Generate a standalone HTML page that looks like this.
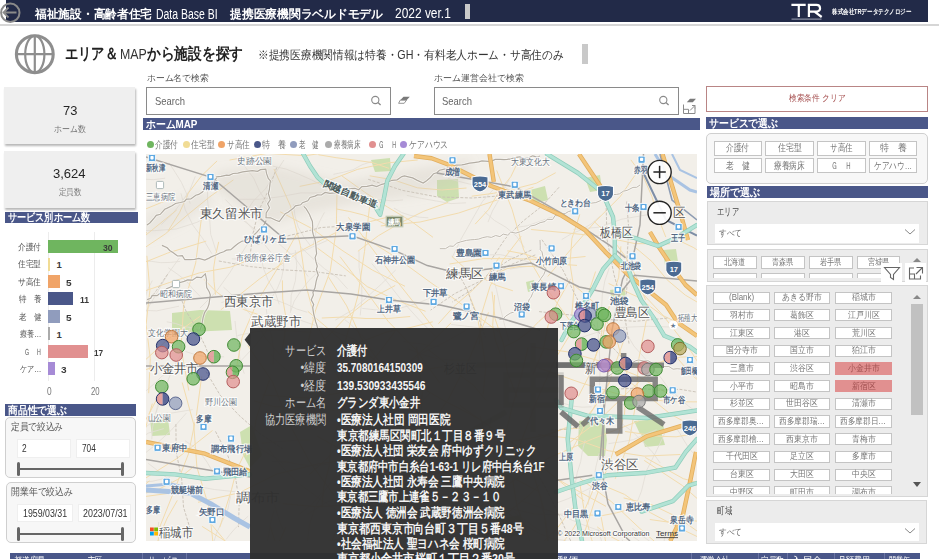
<!DOCTYPE html>
<html><head><meta charset="utf-8">
<style>
*{margin:0;padding:0;box-sizing:border-box}
html,body{width:940px;height:559px;overflow:hidden;background:#fff;font-family:"Liberation Sans",sans-serif;position:relative}
.a{position:absolute}
.f{position:absolute;white-space:nowrap;line-height:1}
.f>.s{display:inline-block;white-space:nowrap;transform-origin:0 0}
.c{text-align:center}
.c>.s{transform-origin:50% 0}
.r{text-align:right}
.r>.s{transform-origin:100% 0}
.bar{position:absolute;background:#4a5789}
.card{position:absolute;background:#efefef;box-shadow:1px 2px 2px #b8b8b8}
.sbox{position:absolute;border:1px solid #8a8a8a;background:#fff}
.rc{position:absolute;border:1px solid #cfcfcf;border-radius:5px;background:#f7f7f7}
.gc{position:absolute;background:#ececec;border:1px solid #d6d6d6}
.btn{position:absolute;border:1px solid #c4c4c4;background:#fff}
.bt{position:absolute;color:#777;font-size:9px;line-height:1;white-space:nowrap;text-align:center}
.w{color:#fff}
</style></head><body>
<!-- HEADER -->
<div class="a" style="left:6px;top:0;width:921.5px;height:22px;background:#222a48"></div>
<div class="a" style="left:0;top:24px;width:939px;height:2px;background:#d6d6d6"></div>
<svg class="a" style="left:0;top:0" width="24" height="26"><circle cx="10.3" cy="12.8" r="9.2" fill="none" stroke="#8a8a8a" stroke-width="2"/><path d="M3.5 12.5H16.5M8.5 7.5L3.5 12.5L8.5 17.5" fill="none" stroke="#8a8a8a" stroke-width="1.8"/></svg>
<div class="f w" style="left:35px;top:8.3px;width:117px;font-size:12px;font-weight:bold"><span class="s" style="transform:scaleX(0.975)">福祉施設・高齢者住宅</span></div>
<div class="f w" style="left:155.5px;top:6.6px;width:62px;font-size:14px"><span class="s" style="transform:scaleX(0.747)">Data Base BI</span></div>
<div class="f w" style="left:229.5px;top:8.3px;width:153px;font-size:12px;font-weight:bold"><span class="s" style="transform:scaleX(0.9808)">提携医療機関ラベルドモデル</span></div>
<div class="f w" style="left:395px;top:6.4px;width:56px;font-size:14.5px"><span class="s" style="transform:scaleX(0.8235)">2022 ver.1</span></div>
<div class="a" style="left:464.5px;top:4px;width:5.5px;height:15px;background:#c9c9c9"></div>
<svg class="a" style="left:785px;top:0" width="45" height="22"><path d="M6.4 4.8H20.7M13.8 4.8V17M23.9 17V4.8H31.5C36 4.8 36.5 11.6 31.5 11.6H24.2M29.5 11.6L36.7 17" fill="none" stroke="#fff" stroke-width="2.2"/><rect x="6.5" y="18.6" width="30" height="1" fill="#c0c4d4" fill-opacity="0.8"/></svg>
<div class="f w" style="left:832px;top:8px;width:79px;font-size:7px;font-weight:bold"><span class="s" style="transform:scaleX(0.79)">株式会社TRデータテクノロジー</span></div>

<!-- TITLE -->
<svg class="a" style="left:10px;top:30px" width="50" height="50"><circle cx="24.8" cy="24.2" r="18.4" fill="none" stroke="#8e8e8e" stroke-width="3.1"/><ellipse cx="24.8" cy="24.2" rx="9.6" ry="18.4" fill="none" stroke="#8e8e8e" stroke-width="2.2"/><path d="M6.5 24.2H43M24.8 6V42.5" stroke="#8e8e8e" stroke-width="2.2"/></svg>
<div class="f" style="left:64.5px;top:46px;width:53px;font-size:16px;font-weight:bold;color:#222"><span class="s" style="transform:scaleX(0.8281)">エリア＆</span></div>
<div class="f" style="left:119.5px;top:47.4px;width:26.5px;font-size:14px;color:#333"><span class="s" style="transform:scaleX(0.8833)">MAP</span></div>
<div class="f" style="left:147px;top:46px;width:96px;font-size:16px;font-weight:bold;color:#222"><span class="s" style="transform:scaleX(0.8571)">から施設を探す</span></div>
<div class="f" style="left:258px;top:49px;width:305.5px;font-size:12px;color:#333"><span class="s" style="transform:scaleX(0.8933)">※提携医療機関情報は特養・GH・有料老人ホーム・サ高住のみ</span></div>
<div class="a" style="left:581.5px;top:43.5px;width:6.5px;height:20px;background:#c9c9c9"></div>

<!-- SEARCH -->
<div class="f" style="left:146.5px;top:73.5px;width:61.5px;font-size:9px;color:#555"><span class="s" style="transform:scaleX(0.9762)">ホーム名で検索</span></div>
<div class="sbox" style="left:146px;top:87px;width:245px;height:28px"></div>
<div class="f" style="left:154.5px;top:96px;width:30px;font-size:11px;color:#666"><span class="s" style="transform:scaleX(0.8571)">Search</span></div>
<svg class="a" style="left:368px;top:93px" width="16" height="16"><circle cx="7.3" cy="7" r="3.6" fill="none" stroke="#8a8a8a" stroke-width="1.1"/><path d="M9.9 9.6L12.6 12" stroke="#8a8a8a" stroke-width="1.3"/></svg>
<svg class="a" style="left:398px;top:94px" width="14" height="12"><path d="M5.5 2.8H11.8L8.5 6.2H2.2Z" fill="#7a7a7a"/><path d="M2.2 6.2H8.5L6.2 9.3H0.6Z" fill="#fff" stroke="#8a8a8a" stroke-width="0.9"/></svg>
<div class="f" style="left:433.5px;top:73.5px;width:89.5px;font-size:9px;color:#555"><span class="s" style="transform:scaleX(0.9944)">ホーム運営会社で検索</span></div>
<div class="sbox" style="left:433.5px;top:87px;width:245.5px;height:28px"></div>
<div class="f" style="left:441.5px;top:96px;width:30px;font-size:11px;color:#666"><span class="s" style="transform:scaleX(0.8571)">Search</span></div>
<svg class="a" style="left:656px;top:93px" width="16" height="16"><circle cx="7.3" cy="7" r="3.6" fill="none" stroke="#8a8a8a" stroke-width="1.1"/><path d="M9.9 9.6L12.6 12" stroke="#8a8a8a" stroke-width="1.3"/></svg>
<svg class="a" style="left:682px;top:94px" width="16" height="22"><path d="M8 4.8H14L10.8 8.2H4.8Z" fill="#7a7a7a"/><path d="M1.5 10.5V19.5H13V13.5M1.5 15.3H6.5V19.5M8 16.5L13 11.5M10 11.5H13V14.5" fill="none" stroke="#8a8a8a" stroke-width="1"/></svg>
<!-- KPI -->
<div class="card" style="left:4px;top:87px;width:131px;height:57px"></div>
<div class="f" style="left:63px;top:104px;width:14.3px;font-size:13.5px;color:#252525"><span class="s" style="transform:scaleX(0.9533)">73</span></div>
<div class="f" style="left:53.7px;top:124.5px;width:31.6px;font-size:9px;color:#777"><span class="s" style="transform:scaleX(0.8778)">ホーム数</span></div>
<div class="card" style="left:4px;top:150.5px;width:131px;height:57px"></div>
<div class="f" style="left:53.1px;top:167px;width:32.8px;font-size:13.5px;color:#252525"><span class="s" style="transform:scaleX(0.9647)">3,624</span></div>
<div class="f" style="left:58.5px;top:188px;width:22.5px;font-size:9px;color:#777"><span class="s" style="transform:scaleX(0.8333)">定員数</span></div>
<div class="bar" style="left:5px;top:211.5px;width:133px;height:11.5px"></div>
<div class="f w" style="left:8px;top:212px;width:82px;font-size:11px;font-weight:bold"><span class="s" style="transform:scaleX(0.8283)">サービス別ホーム数</span></div>

<!-- BAR CHART -->
<div class="a" style="left:48px;top:232px;width:1px;height:149px;background:#ececec"></div>
<div class="a" style="left:94px;top:232px;width:1px;height:149px;background:#ececec"></div>
<div class="a" style="left:48px;top:240px;width:69.5px;height:13px;background:#6fb55f"></div>
<div class="a" style="left:48px;top:257.5px;width:2.4px;height:13px;background:#f1dc95"></div>
<div class="a" style="left:48px;top:275px;width:11.8px;height:13px;background:#f0a468"></div>
<div class="a" style="left:48px;top:292.4px;width:25.3px;height:13px;background:#4a5789"></div>
<div class="a" style="left:48px;top:309.9px;width:11.8px;height:13px;background:#909cbd"></div>
<div class="a" style="left:48px;top:327.3px;width:2.4px;height:13px;background:#ababab"></div>
<div class="a" style="left:48px;top:344.8px;width:39.6px;height:13px;background:#e19090"></div>
<div class="a" style="left:48px;top:362.2px;width:7.2px;height:13px;background:#a68bd6"></div>
<div class="f" style="left:18.4px;top:242.5px;width:22.9px;font-size:9px;color:#555"><span class="s" style="transform:scaleX(0.8481)">介護付</span></div>
<div class="f" style="left:18.4px;top:260px;width:22.9px;font-size:9px;color:#555"><span class="s" style="transform:scaleX(0.8481)">住宅型</span></div>
<div class="f" style="left:18.4px;top:277.5px;width:22.9px;font-size:9px;color:#555"><span class="s" style="transform:scaleX(0.8481)">サ高住</span></div>
<div class="f" style="left:18.8px;top:295px;width:22.5px;font-size:9px;color:#555"><span class="s" style="transform:scaleX(0.8333)">特　養</span></div>
<div class="f" style="left:18.8px;top:312.5px;width:22.5px;font-size:9px;color:#555"><span class="s" style="transform:scaleX(0.8333)">老　健</span></div>
<div class="f" style="left:20.0px;top:330px;width:21.3px;font-size:9px;color:#555"><span class="s" style="transform:scaleX(0.7889)">療養…</span></div>
<div class="f" style="left:23.8px;top:347.5px;width:17.5px;font-size:9px;color:#555"><span class="s" style="transform:scaleX(0.6481)">Ｇ　Ｈ</span></div>
<div class="f" style="left:20.0px;top:365px;width:21.3px;font-size:9px;color:#555"><span class="s" style="transform:scaleX(0.7889)">ケア…</span></div>
<div class="f" style="left:102.5px;top:242.5px;width:10px;font-size:9.5px;font-weight:bold;color:#3a3a3a"><span class="s" style="transform:scaleX(0.9091)">30</span></div>
<div class="f" style="left:56.5px;top:260px;width:5px;font-size:9.5px;font-weight:bold;color:#3a3a3a"><span class="s" style="transform:scaleX(1)">1</span></div>
<div class="f" style="left:66px;top:277.5px;width:5.3px;font-size:9.5px;font-weight:bold;color:#3a3a3a"><span class="s" style="transform:scaleX(1.06)">5</span></div>
<div class="f" style="left:79.5px;top:295px;width:9px;font-size:9.5px;font-weight:bold;color:#3a3a3a"><span class="s" style="transform:scaleX(0.9)">11</span></div>
<div class="f" style="left:66px;top:312.5px;width:5.3px;font-size:9.5px;font-weight:bold;color:#3a3a3a"><span class="s" style="transform:scaleX(1.06)">5</span></div>
<div class="f" style="left:56.5px;top:330px;width:5px;font-size:9.5px;font-weight:bold;color:#3a3a3a"><span class="s" style="transform:scaleX(1)">1</span></div>
<div class="f" style="left:93.5px;top:347.5px;width:9.5px;font-size:9.5px;font-weight:bold;color:#3a3a3a"><span class="s" style="transform:scaleX(0.8636)">17</span></div>
<div class="f" style="left:60.5px;top:365px;width:5.3px;font-size:9.5px;font-weight:bold;color:#3a3a3a"><span class="s" style="transform:scaleX(1.06)">3</span></div>
<div class="f" style="left:46.5px;top:387px;width:5px;font-size:10px;color:#777"><span class="s" style="transform:scaleX(0.8333)">0</span></div>
<div class="f" style="left:90.5px;top:387px;width:8.5px;font-size:10px;color:#777"><span class="s" style="transform:scaleX(0.7727)">20</span></div>

<!-- 商品性 -->
<div class="bar" style="left:5px;top:404px;width:131px;height:12px"></div>
<div class="f w" style="left:8px;top:404.5px;width:59px;font-size:11px;font-weight:bold"><span class="s" style="transform:scaleX(0.8939)">商品性で選ぶ</span></div>
<div class="rc" style="left:5px;top:417px;width:131px;height:61px"></div>
<div class="f" style="left:11px;top:422px;width:52px;font-size:9.5px;color:#555"><span class="s" style="transform:scaleX(0.8667)">定員で絞込み</span></div>
<div class="a" style="left:17px;top:439px;width:54px;height:18.5px;background:#fff;border:1px solid #efefef"></div>
<div class="a" style="left:76px;top:439px;width:54px;height:18.5px;background:#fff;border:1px solid #efefef"></div>
<div class="f" style="left:22px;top:444px;width:5px;font-size:10px;color:#333"><span class="s" style="transform:scaleX(0.8333)">2</span></div>
<div class="f" style="left:81.5px;top:444px;width:14px;font-size:10px;color:#333"><span class="s" style="transform:scaleX(0.8235)">704</span></div>
<div class="a" style="left:17px;top:467.5px;width:106px;height:2.4px;background:#666"></div>
<div class="a" style="left:16.5px;top:462px;width:3px;height:14px;border-radius:1.5px;background:#666"></div>
<div class="a" style="left:120.5px;top:462px;width:3px;height:14px;border-radius:1.5px;background:#666"></div>
<div class="rc" style="left:5.5px;top:482px;width:130px;height:61px"></div>
<div class="f" style="left:11px;top:486.5px;width:62px;font-size:9.5px;color:#555"><span class="s" style="transform:scaleX(0.8857)">開業年で絞込み</span></div>
<div class="a" style="left:17px;top:503.5px;width:56px;height:18.5px;background:#fff;border:1px solid #efefef"></div>
<div class="a" style="left:77.5px;top:503.5px;width:53px;height:18.5px;background:#fff;border:1px solid #efefef"></div>
<div class="f" style="left:22.5px;top:508.5px;width:44px;font-size:10px;color:#333"><span class="s" style="transform:scaleX(0.88)">1959/03/31</span></div>
<div class="f" style="left:82.5px;top:508.5px;width:44.5px;font-size:10px;color:#333"><span class="s" style="transform:scaleX(0.89)">2023/07/31</span></div>
<div class="a" style="left:17px;top:532.5px;width:106px;height:2.4px;background:#666"></div>
<div class="a" style="left:16.5px;top:527px;width:3px;height:14px;border-radius:1.5px;background:#666"></div>
<div class="a" style="left:120.5px;top:527px;width:3px;height:14px;border-radius:1.5px;background:#666"></div>

<!-- BOTTOM TABLE HEADER -->
<div class="a" style="left:10px;top:553px;width:910px;height:6px;background:#4a5789"></div>
<div class="a" style="left:142px;top:553px;width:1px;height:6px;background:#6a74a4"></div>
<div class="a" style="left:186px;top:553px;width:1px;height:6px;background:#6a74a4"></div>
<div class="a" style="left:691px;top:553px;width:1px;height:6px;background:#6a74a4"></div>
<div class="a" style="left:758px;top:553px;width:1px;height:6px;background:#6a74a4"></div>
<div class="a" style="left:787px;top:553px;width:1px;height:6px;background:#6a74a4"></div>
<div class="a" style="left:833.5px;top:553px;width:1px;height:6px;background:#6a74a4"></div>
<div class="a" style="left:884px;top:553px;width:1px;height:6px;background:#6a74a4"></div>
<div class="f w" style="left:14px;top:556px;width:31px;font-size:10px"><span class="s" style="transform:scaleX(0.775)">都道府県</span></div>
<div class="f w" style="left:88px;top:556px;width:14px;font-size:10px"><span class="s" style="transform:scaleX(0.7)">市区</span></div>
<div class="f w" style="left:148px;top:556px;width:30px;font-size:10px"><span class="s" style="transform:scaleX(0.75)">サービス</span></div>
<div class="f w" style="left:557px;top:556px;width:21px;font-size:10px"><span class="s" style="transform:scaleX(1.05)">郵便</span></div>
<div class="f w" style="left:700px;top:556px;width:29px;font-size:10px"><span class="s" style="transform:scaleX(0.725)">運営会社</span></div>
<div class="f w" style="left:761px;top:556px;width:23px;font-size:10px"><span class="s" style="transform:scaleX(0.7667)">定員数</span></div>
<div class="f w" style="left:791px;top:556px;width:32px;font-size:10px"><span class="s" style="transform:scaleX(1.0667)">入居金</span></div>
<div class="f w" style="left:838px;top:556px;width:32px;font-size:10px"><span class="s" style="transform:scaleX(0.8)">月額費用</span></div>
<div class="f w" style="left:889px;top:556px;width:21px;font-size:10px"><span class="s" style="transform:scaleX(0.7)">開業年</span></div>

<!-- RIGHT -->
<div class="a" style="left:706px;top:86px;width:222px;height:26px;border:1px solid #b98585;background:#fff"></div>
<div class="f" style="left:788.9px;top:93.9px;width:56.7px;font-size:9px;color:#a65050"><span class="s" style="transform:scaleX(0.8591)">検索条件 クリア</span></div>
<div class="bar" style="left:706px;top:117px;width:222px;height:12px"></div>
<div class="f w" style="left:709px;top:117.5px;width:69px;font-size:11px;font-weight:bold"><span class="s" style="transform:scaleX(0.8961)">サービスで選ぶ</span></div>
<div class="rc" style="left:706px;top:133px;width:222px;height:51px"></div>
<div class="btn" style="left:713.5px;top:140.5px;width:48.5px;height:15px"></div>
<div class="f" style="left:726.2px;top:143.2px;width:23.0px;font-size:9.5px;color:#777"><span class="s" style="transform:scaleX(0.7667)">介護付</span></div>
<div class="btn" style="left:765.4px;top:140.5px;width:48.5px;height:15px"></div>
<div class="f" style="left:777.8px;top:143.2px;width:23.7px;font-size:9.5px;color:#777"><span class="s" style="transform:scaleX(0.79)">住宅型</span></div>
<div class="btn" style="left:817px;top:140.5px;width:48.5px;height:15px"></div>
<div class="f" style="left:830.0px;top:143.2px;width:22.5px;font-size:9.5px;color:#777"><span class="s" style="transform:scaleX(0.75)">サ高住</span></div>
<div class="btn" style="left:868.8px;top:140.5px;width:48.5px;height:15px"></div>
<div class="f" style="left:879.6px;top:143.2px;width:26.8px;font-size:9.5px;color:#777"><span class="s" style="transform:scaleX(0.8933)">特　養</span></div>
<div class="btn" style="left:713.5px;top:158.4px;width:48.5px;height:15px"></div>
<div class="f" style="left:726.0px;top:161.2px;width:23.5px;font-size:9.5px;color:#777"><span class="s" style="transform:scaleX(0.7833)">老　健</span></div>
<div class="btn" style="left:765.4px;top:158.4px;width:48.5px;height:15px"></div>
<div class="f" style="left:774.3px;top:161.2px;width:30.7px;font-size:9.5px;color:#777"><span class="s" style="transform:scaleX(0.7675)">療養病床</span></div>
<div class="btn" style="left:817px;top:158.4px;width:48.5px;height:15px"></div>
<div class="f" style="left:831.0px;top:161.2px;width:20.4px;font-size:9.5px;color:#777"><span class="s" style="transform:scaleX(0.68)">Ｇ　Ｈ</span></div>
<div class="btn" style="left:868.8px;top:158.4px;width:48.5px;height:15px"></div>
<div class="f" style="left:873.9px;top:161.2px;width:38.3px;font-size:9.5px;color:#777"><span class="s" style="transform:scaleX(0.766)">ケアハウ…</span></div>
<div class="bar" style="left:707px;top:186px;width:221px;height:12.3px"></div>
<div class="f w" style="left:710px;top:186.5px;width:50px;font-size:11px;font-weight:bold"><span class="s" style="transform:scaleX(0.9091)">場所で選ぶ</span></div>
<div class="gc" style="left:707px;top:201px;width:221px;height:43.5px"></div>
<div class="f" style="left:716.5px;top:206.5px;width:22px;font-size:9.5px;color:#444"><span class="s" style="transform:scaleX(0.7333)">エリア</span></div>
<div class="a" style="left:715px;top:224px;width:204px;height:18.5px;background:#fff"></div>
<div class="f" style="left:719px;top:229px;width:23px;font-size:9px;color:#666"><span class="s" style="transform:scaleX(0.8519)">すべて</span></div>
<svg class="a" style="left:904px;top:228px" width="12" height="8"><path d="M1 1.5L6 6L11 1.5" fill="none" stroke="#888" stroke-width="1"/></svg>
<div class="gc" style="left:707px;top:249px;width:221px;height:32.5px;overflow:hidden"></div>
<div class="btn" style="left:713.3px;top:255.7px;width:43.3px;height:13px"></div>
<div class="f" style="left:724.2px;top:257.7px;width:21.5px;font-size:9px;color:#777"><span class="s" style="transform:scaleX(0.7963)">北海道</span></div>
<div class="btn" style="left:713.3px;top:273px;width:43.3px;height:5px;border-bottom:none"></div>
<div class="btn" style="left:761.3px;top:255.7px;width:43.3px;height:13px"></div>
<div class="f" style="left:772.2px;top:257.7px;width:21.5px;font-size:9px;color:#777"><span class="s" style="transform:scaleX(0.7963)">青森県</span></div>
<div class="btn" style="left:761.3px;top:273px;width:43.3px;height:5px;border-bottom:none"></div>
<div class="btn" style="left:809.3px;top:255.7px;width:43.3px;height:13px"></div>
<div class="f" style="left:820.2px;top:257.7px;width:21.5px;font-size:9px;color:#777"><span class="s" style="transform:scaleX(0.7963)">岩手県</span></div>
<div class="btn" style="left:809.3px;top:273px;width:43.3px;height:5px;border-bottom:none"></div>
<div class="btn" style="left:856.8px;top:255.7px;width:43.3px;height:13px"></div>
<div class="f" style="left:867.7px;top:257.7px;width:21.5px;font-size:9px;color:#777"><span class="s" style="transform:scaleX(0.7963)">宮城県</span></div>
<div class="btn" style="left:856.8px;top:273px;width:43.3px;height:5px;border-bottom:none"></div>
<svg class="a" style="left:912px;top:257px" width="10" height="6"><path d="M1 5L5 1L9 5Z" fill="#888"/></svg>
<div class="a" style="left:881px;top:263px;width:21px;height:18.5px;background:#fff"></div>
<div class="a" style="left:905px;top:263px;width:21px;height:18.5px;background:#fff"></div>
<svg class="a" style="left:882px;top:265px" width="20" height="16"><path d="M2.5 2.5H17.5L11.5 9.5V14.5L8.5 12.5V9.5Z" fill="none" stroke="#666" stroke-width="1.1"/></svg>
<svg class="a" style="left:907px;top:265px" width="18" height="16"><path d="M9.5 2.5H15.5V8.5M15.5 2.5L9 9M7 3H2.5V14H13.5V10.5M2.5 9H7.5V14" fill="none" stroke="#666" stroke-width="1.1"/></svg>
<div class="gc" style="left:706px;top:284.6px;width:221.5px;height:212.7px"></div>
<div class="btn" style="left:713.3px;top:291.5px;width:56.3px;height:12.3px;background:#fff;border-color:#c4c4c4;"></div>
<div class="f" style="left:728.7px;top:293.1px;width:25.5px;font-size:9px;color:#777"><span class="s" style="transform:scaleX(0.8793)">(Blank)</span></div>
<div class="btn" style="left:774px;top:291.5px;width:56.3px;height:12.3px;background:#fff;border-color:#c4c4c4;"></div>
<div class="f" style="left:782.4px;top:293.1px;width:39.5px;font-size:9px;color:#777"><span class="s" style="transform:scaleX(0.8778)">あきる野市</span></div>
<div class="btn" style="left:835.3px;top:291.5px;width:56.3px;height:12.3px;background:#fff;border-color:#c4c4c4;"></div>
<div class="f" style="left:851.6px;top:293.1px;width:23.7px;font-size:9px;color:#777"><span class="s" style="transform:scaleX(0.8778)">稲城市</span></div>
<div class="btn" style="left:713.3px;top:309.2px;width:56.3px;height:12.3px;background:#fff;border-color:#c4c4c4;"></div>
<div class="f" style="left:729.6px;top:310.8px;width:23.7px;font-size:9px;color:#777"><span class="s" style="transform:scaleX(0.8778)">羽村市</span></div>
<div class="btn" style="left:774px;top:309.2px;width:56.3px;height:12.3px;background:#fff;border-color:#c4c4c4;"></div>
<div class="f" style="left:790.3px;top:310.8px;width:23.7px;font-size:9px;color:#777"><span class="s" style="transform:scaleX(0.8778)">葛飾区</span></div>
<div class="btn" style="left:835.3px;top:309.2px;width:56.3px;height:12.3px;background:#fff;border-color:#c4c4c4;"></div>
<div class="f" style="left:847.6px;top:310.8px;width:31.6px;font-size:9px;color:#777"><span class="s" style="transform:scaleX(0.8778)">江戸川区</span></div>
<div class="btn" style="left:713.3px;top:326.9px;width:56.3px;height:12.3px;background:#fff;border-color:#c4c4c4;"></div>
<div class="f" style="left:729.6px;top:328.5px;width:23.7px;font-size:9px;color:#777"><span class="s" style="transform:scaleX(0.8778)">江東区</span></div>
<div class="btn" style="left:774px;top:326.9px;width:56.3px;height:12.3px;background:#fff;border-color:#c4c4c4;"></div>
<div class="f" style="left:794.2px;top:328.5px;width:15.8px;font-size:9px;color:#777"><span class="s" style="transform:scaleX(0.8778)">港区</span></div>
<div class="btn" style="left:835.3px;top:326.9px;width:56.3px;height:12.3px;background:#fff;border-color:#c4c4c4;"></div>
<div class="f" style="left:851.6px;top:328.5px;width:23.7px;font-size:9px;color:#777"><span class="s" style="transform:scaleX(0.8778)">荒川区</span></div>
<div class="btn" style="left:713.3px;top:344.6px;width:56.3px;height:12.3px;background:#fff;border-color:#c4c4c4;"></div>
<div class="f" style="left:725.6px;top:346.2px;width:31.6px;font-size:9px;color:#777"><span class="s" style="transform:scaleX(0.8778)">国分寺市</span></div>
<div class="btn" style="left:774px;top:344.6px;width:56.3px;height:12.3px;background:#fff;border-color:#c4c4c4;"></div>
<div class="f" style="left:790.3px;top:346.2px;width:23.7px;font-size:9px;color:#777"><span class="s" style="transform:scaleX(0.8778)">国立市</span></div>
<div class="btn" style="left:835.3px;top:344.6px;width:56.3px;height:12.3px;background:#fff;border-color:#c4c4c4;"></div>
<div class="f" style="left:851.6px;top:346.2px;width:23.7px;font-size:9px;color:#777"><span class="s" style="transform:scaleX(0.8778)">狛江市</span></div>
<div class="btn" style="left:713.3px;top:362.3px;width:56.3px;height:12.3px;background:#fff;border-color:#c4c4c4;"></div>
<div class="f" style="left:729.6px;top:363.9px;width:23.7px;font-size:9px;color:#777"><span class="s" style="transform:scaleX(0.8778)">三鷹市</span></div>
<div class="btn" style="left:774px;top:362.3px;width:56.3px;height:12.3px;background:#fff;border-color:#c4c4c4;"></div>
<div class="f" style="left:790.3px;top:363.9px;width:23.7px;font-size:9px;color:#777"><span class="s" style="transform:scaleX(0.8778)">渋谷区</span></div>
<div class="btn" style="left:835.3px;top:362.3px;width:56.3px;height:12.3px;background:#e19090;border-color:#e19090;"></div>
<div class="f" style="left:847.6px;top:363.9px;width:31.6px;font-size:9px;color:#a05050"><span class="s" style="transform:scaleX(0.8778)">小金井市</span></div>
<div class="btn" style="left:713.3px;top:380.0px;width:56.3px;height:12.3px;background:#fff;border-color:#c4c4c4;"></div>
<div class="f" style="left:729.6px;top:381.6px;width:23.7px;font-size:9px;color:#777"><span class="s" style="transform:scaleX(0.8778)">小平市</span></div>
<div class="btn" style="left:774px;top:380.0px;width:56.3px;height:12.3px;background:#fff;border-color:#c4c4c4;"></div>
<div class="f" style="left:790.3px;top:381.6px;width:23.7px;font-size:9px;color:#777"><span class="s" style="transform:scaleX(0.8778)">昭島市</span></div>
<div class="btn" style="left:835.3px;top:380.0px;width:56.3px;height:12.3px;background:#e19090;border-color:#e19090;"></div>
<div class="f" style="left:851.6px;top:381.6px;width:23.7px;font-size:9px;color:#a05050"><span class="s" style="transform:scaleX(0.8778)">新宿区</span></div>
<div class="btn" style="left:713.3px;top:397.7px;width:56.3px;height:12.3px;background:#fff;border-color:#c4c4c4;"></div>
<div class="f" style="left:729.6px;top:399.3px;width:23.7px;font-size:9px;color:#777"><span class="s" style="transform:scaleX(0.8778)">杉並区</span></div>
<div class="btn" style="left:774px;top:397.7px;width:56.3px;height:12.3px;background:#fff;border-color:#c4c4c4;"></div>
<div class="f" style="left:786.4px;top:399.3px;width:31.6px;font-size:9px;color:#777"><span class="s" style="transform:scaleX(0.8778)">世田谷区</span></div>
<div class="btn" style="left:835.3px;top:397.7px;width:56.3px;height:12.3px;background:#fff;border-color:#c4c4c4;"></div>
<div class="f" style="left:851.6px;top:399.3px;width:23.7px;font-size:9px;color:#777"><span class="s" style="transform:scaleX(0.8778)">清瀬市</span></div>
<div class="btn" style="left:713.3px;top:415.4px;width:56.3px;height:12.3px;background:#fff;border-color:#c4c4c4;"></div>
<div class="f" style="left:718.4px;top:417.0px;width:46.0px;font-size:9px;color:#777"><span class="s" style="transform:scaleX(0.8519)">西多摩郡奥…</span></div>
<div class="btn" style="left:774px;top:415.4px;width:56.3px;height:12.3px;background:#fff;border-color:#c4c4c4;"></div>
<div class="f" style="left:779.1px;top:417.0px;width:46.0px;font-size:9px;color:#777"><span class="s" style="transform:scaleX(0.8519)">西多摩郡瑞…</span></div>
<div class="btn" style="left:835.3px;top:415.4px;width:56.3px;height:12.3px;background:#fff;border-color:#c4c4c4;"></div>
<div class="f" style="left:840.4px;top:417.0px;width:46.0px;font-size:9px;color:#777"><span class="s" style="transform:scaleX(0.8519)">西多摩郡日…</span></div>
<div class="btn" style="left:713.3px;top:433.1px;width:56.3px;height:12.3px;background:#fff;border-color:#c4c4c4;"></div>
<div class="f" style="left:718.4px;top:434.8px;width:46.0px;font-size:9px;color:#777"><span class="s" style="transform:scaleX(0.8519)">西多摩郡檜…</span></div>
<div class="btn" style="left:774px;top:433.1px;width:56.3px;height:12.3px;background:#fff;border-color:#c4c4c4;"></div>
<div class="f" style="left:786.4px;top:434.8px;width:31.6px;font-size:9px;color:#777"><span class="s" style="transform:scaleX(0.8778)">西東京市</span></div>
<div class="btn" style="left:835.3px;top:433.1px;width:56.3px;height:12.3px;background:#fff;border-color:#c4c4c4;"></div>
<div class="f" style="left:851.6px;top:434.8px;width:23.7px;font-size:9px;color:#777"><span class="s" style="transform:scaleX(0.8778)">青梅市</span></div>
<div class="btn" style="left:713.3px;top:450.8px;width:56.3px;height:12.3px;background:#fff;border-color:#c4c4c4;"></div>
<div class="f" style="left:725.6px;top:452.4px;width:31.6px;font-size:9px;color:#777"><span class="s" style="transform:scaleX(0.8778)">千代田区</span></div>
<div class="btn" style="left:774px;top:450.8px;width:56.3px;height:12.3px;background:#fff;border-color:#c4c4c4;"></div>
<div class="f" style="left:790.3px;top:452.4px;width:23.7px;font-size:9px;color:#777"><span class="s" style="transform:scaleX(0.8778)">足立区</span></div>
<div class="btn" style="left:835.3px;top:450.8px;width:56.3px;height:12.3px;background:#fff;border-color:#c4c4c4;"></div>
<div class="f" style="left:851.6px;top:452.4px;width:23.7px;font-size:9px;color:#777"><span class="s" style="transform:scaleX(0.8778)">多摩市</span></div>
<div class="btn" style="left:713.3px;top:468.5px;width:56.3px;height:12.3px;background:#fff;border-color:#c4c4c4;"></div>
<div class="f" style="left:729.6px;top:470.1px;width:23.7px;font-size:9px;color:#777"><span class="s" style="transform:scaleX(0.8778)">台東区</span></div>
<div class="btn" style="left:774px;top:468.5px;width:56.3px;height:12.3px;background:#fff;border-color:#c4c4c4;"></div>
<div class="f" style="left:790.3px;top:470.1px;width:23.7px;font-size:9px;color:#777"><span class="s" style="transform:scaleX(0.8778)">大田区</span></div>
<div class="btn" style="left:835.3px;top:468.5px;width:56.3px;height:12.3px;background:#fff;border-color:#c4c4c4;"></div>
<div class="f" style="left:851.6px;top:470.1px;width:23.7px;font-size:9px;color:#777"><span class="s" style="transform:scaleX(0.8778)">中央区</span></div>
<div class="btn" style="left:713.3px;top:486.2px;width:56.3px;height:8.1px;background:#fff;border-color:#c4c4c4;border-bottom:none;"></div>
<div class="a" style="left:713.3px;top:486.2px;width:56.3px;height:8.1px;overflow:hidden">
<div class="f" style="left:16.3px;top:1.7px;width:23.7px;font-size:9px;color:#777"><span class="s" style="transform:scaleX(0.8778)">中野区</span></div></div>
<div class="btn" style="left:774px;top:486.2px;width:56.3px;height:8.1px;background:#fff;border-color:#c4c4c4;border-bottom:none;"></div>
<div class="a" style="left:774px;top:486.2px;width:56.3px;height:8.1px;overflow:hidden">
<div class="f" style="left:16.3px;top:1.7px;width:23.7px;font-size:9px;color:#777"><span class="s" style="transform:scaleX(0.8778)">町田市</span></div></div>
<div class="btn" style="left:835.3px;top:486.2px;width:56.3px;height:8.1px;background:#fff;border-color:#c4c4c4;border-bottom:none;"></div>
<div class="a" style="left:835.3px;top:486.2px;width:56.3px;height:8.1px;overflow:hidden">
<div class="f" style="left:16.3px;top:1.7px;width:23.7px;font-size:9px;color:#777"><span class="s" style="transform:scaleX(0.8778)">調布市</span></div></div>
<div class="a" style="left:910.6px;top:304.3px;width:12.8px;height:111px;background:#c1c1c1"></div>
<svg class="a" style="left:912px;top:294px" width="10" height="6"><path d="M1 5L5 1L9 5Z" fill="#888"/></svg>
<svg class="a" style="left:912px;top:481px" width="10" height="7"><path d="M1 1L5 6L9 1Z" fill="#555"/></svg>
<div class="gc" style="left:706px;top:500.3px;width:221.3px;height:43.3px"></div>
<div class="f" style="left:716.5px;top:505.5px;width:15px;font-size:9.5px;color:#444"><span class="s" style="transform:scaleX(0.75)">町域</span></div>
<div class="a" style="left:714.5px;top:523px;width:204px;height:18px;background:#fff"></div>
<div class="f" style="left:719px;top:527.5px;width:23px;font-size:9px;color:#666"><span class="s" style="transform:scaleX(0.8519)">すべて</span></div>
<svg class="a" style="left:904px;top:527px" width="12" height="8"><path d="M1 1.5L6 6L11 1.5" fill="none" stroke="#888" stroke-width="1"/></svg>
<!-- MAP BAR + LEGEND -->
<div class="bar" style="left:143px;top:118.3px;width:556.7px;height:12px"></div>
<div class="f w" style="left:145.5px;top:118.5px;width:51px;font-size:11px;font-weight:bold"><span class="s" style="transform:scaleX(0.8947)">ホームMAP</span></div>
<div class="a" style="left:146.7px;top:141.3px;width:7px;height:7px;border-radius:50%;background:#6fb55f"></div>
<div class="f" style="left:155px;top:140.3px;width:22.8px;font-size:9.5px;color:#777"><span class="s" style="transform:scaleX(0.76)">介護付</span></div>
<div class="a" style="left:182.5px;top:141.3px;width:7px;height:7px;border-radius:50%;background:#f1dc95"></div>
<div class="f" style="left:190.7px;top:140.3px;width:23.3px;font-size:9.5px;color:#777"><span class="s" style="transform:scaleX(0.7767)">住宅型</span></div>
<div class="a" style="left:218.2px;top:141.3px;width:7px;height:7px;border-radius:50%;background:#f0a468"></div>
<div class="f" style="left:226.8px;top:140.3px;width:23.0px;font-size:9.5px;color:#777"><span class="s" style="transform:scaleX(0.7667)">サ高住</span></div>
<div class="a" style="left:254.3px;top:141.3px;width:7px;height:7px;border-radius:50%;background:#4a5789"></div>
<div class="f" style="left:262.2px;top:140.3px;width:24.2px;font-size:9.5px;color:#777"><span class="s" style="transform:scaleX(0.8067)">特　養</span></div>
<div class="a" style="left:289.5px;top:141.3px;width:7px;height:7px;border-radius:50%;background:#909cbd"></div>
<div class="f" style="left:299px;top:140.3px;width:19.7px;font-size:9.5px;color:#777"><span class="s" style="transform:scaleX(0.6567)">老　健</span></div>
<div class="a" style="left:324.8px;top:141.3px;width:7px;height:7px;border-radius:50%;background:#ababab"></div>
<div class="f" style="left:334px;top:140.3px;width:26.2px;font-size:9.5px;color:#777"><span class="s" style="transform:scaleX(0.655)">療養病床</span></div>
<div class="a" style="left:368.9px;top:141.3px;width:7px;height:7px;border-radius:50%;background:#e19090"></div>
<div class="f" style="left:377.8px;top:140.3px;width:19.2px;font-size:9.5px;color:#777"><span class="s" style="transform:scaleX(0.64)">Ｇ　Ｈ</span></div>
<div class="a" style="left:400.1px;top:141.3px;width:7px;height:7px;border-radius:50%;background:#a68bd6"></div>
<div class="f" style="left:408.7px;top:140.3px;width:39.3px;font-size:9.5px;color:#777"><span class="s" style="transform:scaleX(0.786)">ケアハウス</span></div>
<svg class="a" style="left:146px;top:154px" width="551" height="387" viewBox="146 154 551 387">
<rect x="146" y="154" width="551" height="387" fill="#f2efe9"/>
<polygon points="371,160 390,158 391,171 375,172" fill="#cde0b0"/>
<polygon points="437,180 458,179 459,198 447,202 437,196" fill="#cde0b0"/>
<polygon points="172,313 200,310 230,311 232,330 190,332 172,329" fill="#cde0b0"/>
<polygon points="579,421 604,419 607,440 605,456 588,456 578,446" fill="#cde0b0"/>
<polygon points="634,421 662,419 665,433 640,434" fill="#cde0b0"/>
<polygon points="240,432 252,425 262,455 250,468 243,455" fill="#cde0b0"/>
<polygon points="526,282 534,280 536,290 528,292" fill="#cde0b0"/>
<polygon points="663,250 676,249 678,262 665,265" fill="#cde0b0"/>
<polygon points="150,420 168,418 170,435 152,436" fill="#cde0b0"/>
<polygon points="495,520 520,515 525,535 500,538" fill="#cde0b0"/>
<polygon points="640,430 660,428 665,445 645,447" fill="#cde0b0"/>
<polygon points="585,178 600,175 602,190 590,192" fill="#cde0b0"/>
<polygon points="610,290 625,288 626,300 612,302" fill="#cde0b0"/>
<polygon points="530,190 545,186 548,200 534,204" fill="#cde0b0"/>
<polyline points="324.4,212.4 320.3,220.1 316.7,228.1 314.9,236.7 313.1,245.3" fill="none" stroke="#e2ddd5" stroke-width="0.8"/>
<polyline points="166.7,321.8 175.6,323.5 184.1,326.5 193.1,328.0 202.2,328.1" fill="none" stroke="#e2ddd5" stroke-width="0.8"/>
<polyline points="491.7,520.8 485.0,533.6 481.4,547.6 475.4,560.7 470.7,574.3" fill="none" stroke="#e2ddd5" stroke-width="0.8"/>
<polyline points="225.5,199.6 240.5,215.4 254.9,231.7 268.1,249.0 282.4,265.5" fill="none" stroke="#e2ddd5" stroke-width="0.8"/>
<polyline points="447.8,178.3 458.5,181.3 469.3,184.0 480.3,185.6 491.2,187.7" fill="none" stroke="#e2ddd5" stroke-width="0.8"/>
<polyline points="395.7,270.0 381.6,283.8 367.0,297.1 352.2,310.1 335.2,320.2" fill="none" stroke="#e2ddd5" stroke-width="0.8"/>
<polyline points="547.9,265.4 538.4,266.4 528.8,266.2 519.4,267.6 509.9,269.1" fill="none" stroke="#e2ddd5" stroke-width="0.8"/>
<polyline points="167.6,412.6 152.7,421.8 138.7,432.3 123.7,441.4 108.3,449.9" fill="none" stroke="#e2ddd5" stroke-width="0.8"/>
<polyline points="465.5,330.6 444.6,342.4 422.8,352.5 403.7,367.1 383.3,379.7" fill="none" stroke="#e2ddd5" stroke-width="0.8"/>
<polyline points="502.6,538.3 492.4,545.5 481.6,551.9 472.7,560.6 463.9,569.4" fill="none" stroke="#e2ddd5" stroke-width="0.8"/>
<polyline points="238.6,199.3 259.5,199.3 280.3,196.7 300.9,192.9 321.9,193.0" fill="none" stroke="#e2ddd5" stroke-width="0.8"/>
<polyline points="190.4,327.8 183.3,349.7 172.3,369.8 163.7,391.1 156.0,412.7" fill="none" stroke="#e2ddd5" stroke-width="0.8"/>
<polyline points="343.7,496.2 334.0,499.1 324.8,503.3 316.2,508.7 307.6,514.2" fill="none" stroke="#e2ddd5" stroke-width="0.8"/>
<polyline points="470.6,255.7 485.4,254.9 500.2,254.6 514.8,257.7 528.9,262.1" fill="none" stroke="#e2ddd5" stroke-width="0.8"/>
<polyline points="430.0,393.0 424.3,399.2 417.7,404.5 410.2,408.4 402.3,411.3" fill="none" stroke="#e2ddd5" stroke-width="0.8"/>
<polyline points="362.2,308.4 380.7,310.4 399.2,308.3 417.2,303.6 434.1,296.0" fill="none" stroke="#e2ddd5" stroke-width="0.8"/>
<polyline points="333.4,174.3 343.3,172.3 353.1,169.7 362.0,164.8 371.6,161.6" fill="none" stroke="#e2ddd5" stroke-width="0.8"/>
<polyline points="484.4,211.5 494.5,220.5 506.2,227.4 516.5,236.3 524.3,247.4" fill="none" stroke="#e2ddd5" stroke-width="0.8"/>
<polyline points="402.8,341.2 411.9,343.0 421.1,343.7 430.2,345.9 439.4,346.5" fill="none" stroke="#e2ddd5" stroke-width="0.8"/>
<polyline points="158.7,522.0 157.6,532.0 158.9,542.0 160.0,552.0 158.7,562.0" fill="none" stroke="#e2ddd5" stroke-width="0.8"/>
<polyline points="621.7,423.4 632.7,431.9 642.5,441.8 652.2,451.8 660.3,463.1" fill="none" stroke="#e2ddd5" stroke-width="0.8"/>
<polyline points="327.6,240.3 305.0,250.3 281.1,256.7 256.5,259.3 231.8,258.9" fill="none" stroke="#e2ddd5" stroke-width="0.8"/>
<polyline points="270.9,354.3 276.0,360.5 281.8,366.1 288.1,370.9 294.0,376.4" fill="none" stroke="#e2ddd5" stroke-width="0.8"/>
<polyline points="673.0,327.1 648.3,326.3 623.5,327.3 599.1,331.7 575.5,339.3" fill="none" stroke="#e2ddd5" stroke-width="0.8"/>
<polyline points="254.4,233.1 242.0,252.8 229.9,272.6 216.3,291.5 200.0,308.1" fill="none" stroke="#e2ddd5" stroke-width="0.8"/>
<polyline points="192.7,409.6 171.8,413.0 150.9,416.6 130.9,423.4 110.0,427.3" fill="none" stroke="#e2ddd5" stroke-width="0.8"/>
<polyline points="329.2,463.9 314.9,465.9 300.6,464.7 286.4,461.9 272.0,461.4" fill="none" stroke="#e2ddd5" stroke-width="0.8"/>
<polyline points="216.0,212.5 196.8,222.4 176.2,229.0 154.7,230.6 133.0,230.5" fill="none" stroke="#e2ddd5" stroke-width="0.8"/>
<polyline points="339.1,366.3 345.3,371.0 351.1,376.1 356.8,381.3 361.3,387.6" fill="none" stroke="#e2ddd5" stroke-width="0.8"/>
<polyline points="385.0,491.4 376.3,498.3 368.3,506.1 361.3,514.9 354.0,523.4" fill="none" stroke="#e2ddd5" stroke-width="0.8"/>
<polyline points="288.9,316.2 311.0,323.9 333.3,331.3 355.2,339.5 375.0,352.0" fill="none" stroke="#e2ddd5" stroke-width="0.8"/>
<polyline points="377.8,509.2 377.5,526.0 381.2,542.4 385.4,558.6 392.2,574.0" fill="none" stroke="#e2ddd5" stroke-width="0.8"/>
<polyline points="148.2,463.3 160.7,472.9 172.9,482.8 186.0,491.7 199.0,500.7" fill="none" stroke="#e2ddd5" stroke-width="0.8"/>
<polyline points="452.0,457.5 469.0,461.1 486.2,462.7 503.0,466.7 519.9,470.8" fill="none" stroke="#e2ddd5" stroke-width="0.8"/>
<polyline points="455.5,448.1 440.6,451.4 425.7,454.7 410.8,457.9 395.6,459.6" fill="none" stroke="#e2ddd5" stroke-width="0.8"/>
<polyline points="395.2,360.4 394.5,384.3 389.3,407.8 379.1,429.4 371.6,452.2" fill="none" stroke="#e2ddd5" stroke-width="0.8"/>
<polyline points="454.3,519.0 446.7,525.4 439.2,531.9 433.3,539.9 428.5,548.5" fill="none" stroke="#e2ddd5" stroke-width="0.8"/>
<polyline points="186.3,413.1 171.0,430.5 153.9,446.2 135.7,460.5 120.2,477.8" fill="none" stroke="#e2ddd5" stroke-width="0.8"/>
<polyline points="632.4,528.4 651.8,542.9 671.3,557.1 686.8,575.7 698.9,596.6" fill="none" stroke="#e2ddd5" stroke-width="0.8"/>
<polyline points="235.0,321.0 236.4,334.4 238.9,347.5 240.0,360.9 244.3,373.7" fill="none" stroke="#e2ddd5" stroke-width="0.8"/>
<polyline points="451.3,324.5 464.5,326.0 477.7,327.7 490.9,326.5 504.1,328.4" fill="none" stroke="#e2ddd5" stroke-width="0.8"/>
<polyline points="580.4,530.0 592.5,531.2 604.3,534.1 616.3,535.6 628.5,534.9" fill="none" stroke="#e2ddd5" stroke-width="0.8"/>
<polyline points="378.7,506.7 369.8,514.9 359.5,521.0 348.9,526.7 337.8,531.4" fill="none" stroke="#e2ddd5" stroke-width="0.8"/>
<polyline points="195.3,176.3 189.8,190.2 181.4,202.5 172.2,214.3 161.3,224.5" fill="none" stroke="#e2ddd5" stroke-width="0.8"/>
<polyline points="192.1,485.4 214.4,489.5 236.8,491.9 259.2,494.9 280.5,502.6" fill="none" stroke="#e2ddd5" stroke-width="0.8"/>
<polyline points="293.6,204.0 294.9,215.6 298.1,226.8 303.8,237.0 310.9,246.3" fill="none" stroke="#e2ddd5" stroke-width="0.8"/>
<polyline points="317.9,272.0 308.8,280.7 301.1,290.6 294.2,301.2 290.1,313.0" fill="none" stroke="#e2ddd5" stroke-width="0.8"/>
<polyline points="284.0,159.9 274.6,174.3 265.5,188.8 253.4,201.0 243.9,215.3" fill="none" stroke="#e2ddd5" stroke-width="0.8"/>
<polyline points="597.2,321.3 598.8,343.3 600.2,365.4 599.6,387.5 593.7,408.8" fill="none" stroke="#e2ddd5" stroke-width="0.8"/>
<polyline points="334.8,476.1 324.3,491.5 314.9,507.6 309.4,525.3 307.2,543.8" fill="none" stroke="#e2ddd5" stroke-width="0.8"/>
<polyline points="185.0,440.7 193.5,446.5 201.0,453.7 207.0,462.1 212.3,471.1" fill="none" stroke="#e2ddd5" stroke-width="0.8"/>
<polyline points="301.3,247.7 312.7,258.3 324.4,268.6 337.2,277.4 347.6,288.9" fill="none" stroke="#e2ddd5" stroke-width="0.8"/>
<polyline points="681.9,365.7 701.0,380.9 721.1,394.7 744.0,403.1 767.4,410.2" fill="none" stroke="#e2ddd5" stroke-width="0.8"/>
<polyline points="407.5,348.6 422.7,354.7 438.4,359.0 454.7,360.0 471.1,360.1" fill="none" stroke="#e2ddd5" stroke-width="0.8"/>
<polyline points="169.0,162.7 175.2,172.4 181.4,182.3 186.2,192.8 190.2,203.6" fill="none" stroke="#e2ddd5" stroke-width="0.8"/>
<polyline points="540.5,494.2 541.9,507.3 545.5,520.0 547.8,533.1 549.0,546.2" fill="none" stroke="#e2ddd5" stroke-width="0.8"/>
<polyline points="170.1,477.3 152.1,481.3 133.7,482.6 115.7,487.1 97.8,491.4" fill="none" stroke="#e2ddd5" stroke-width="0.8"/>
<polyline points="423.9,477.1 405.4,489.0 385.0,497.0 363.9,503.2 342.3,507.3" fill="none" stroke="#e2ddd5" stroke-width="0.8"/>
<polyline points="272.7,166.1 286.2,169.1 299.0,174.3 311.6,179.9 323.8,186.3" fill="none" stroke="#e2ddd5" stroke-width="0.8"/>
<polyline points="491.1,417.4 490.2,424.9 488.4,432.3 486.6,439.6 484.7,446.9" fill="none" stroke="#e2ddd5" stroke-width="0.8"/>
<polyline points="509.3,179.6 503.2,189.8 498.4,200.7 492.4,211.0 488.0,222.1" fill="none" stroke="#e2ddd5" stroke-width="0.8"/>
<polyline points="553.6,531.6 554.1,545.8 553.2,560.0 550.4,573.9 546.8,587.6" fill="none" stroke="#e2ddd5" stroke-width="0.8"/>
<polyline points="500.2,184.0 510.1,190.6 520.7,196.2 531.0,202.1 542.5,205.4" fill="none" stroke="#e2ddd5" stroke-width="0.8"/>
<polyline points="179.4,258.0 167.9,273.9 158.1,290.9 148.1,307.8 138.5,324.8" fill="none" stroke="#e2ddd5" stroke-width="0.8"/>
<polyline points="403.0,199.9 392.0,200.9 381.1,199.6 370.2,200.8 359.3,202.4" fill="none" stroke="#e2ddd5" stroke-width="0.8"/>
<polyline points="597.8,528.7 601.4,540.3 602.4,552.5 605.1,564.4 607.4,576.3" fill="none" stroke="#e2ddd5" stroke-width="0.8"/>
<polyline points="224.1,356.8 214.3,356.7 204.5,356.5 194.9,354.5 185.5,351.5" fill="none" stroke="#e2ddd5" stroke-width="0.8"/>
<polyline points="273.5,501.4 275.8,509.0 278.1,516.6 280.6,524.1 283.8,531.4" fill="none" stroke="#e2ddd5" stroke-width="0.8"/>
<polyline points="223.5,287.1 239.9,302.1 254.2,319.1 265.5,338.2 280.1,354.9" fill="none" stroke="#e2ddd5" stroke-width="0.8"/>
<polyline points="656.4,429.9 644.7,434.5 633.3,439.7 620.9,441.9 608.5,443.6" fill="none" stroke="#e2ddd5" stroke-width="0.8"/>
<polyline points="344.8,319.7 351.3,324.8 356.9,331.0 363.2,336.5 368.1,343.3" fill="none" stroke="#e2ddd5" stroke-width="0.8"/>
<polyline points="283.4,256.8 283.7,267.7 281.5,278.3 277.4,288.3 271.8,297.5" fill="none" stroke="#e2ddd5" stroke-width="0.8"/>
<polyline points="493.6,507.5 476.6,508.8 460.2,513.9 443.4,517.0 426.7,520.6" fill="none" stroke="#e2ddd5" stroke-width="0.8"/>
<polyline points="560.7,403.4 564.4,410.9 569.4,417.6 574.6,424.2 580.2,430.4" fill="none" stroke="#e2ddd5" stroke-width="0.8"/>
<polyline points="310.1,440.0 298.0,440.0 286.0,441.1 274.0,441.9 262.0,443.4" fill="none" stroke="#e2ddd5" stroke-width="0.8"/>
<polyline points="238.2,216.6 256.8,230.7 277.1,242.2 294.8,257.5 308.1,276.6" fill="none" stroke="#e2ddd5" stroke-width="0.8"/>
<polyline points="393.9,208.0 401.8,212.6 410.4,215.4 419.3,217.2 428.4,217.8" fill="none" stroke="#e2ddd5" stroke-width="0.8"/>
<polyline points="459.9,497.4 449.9,508.2 439.8,519.0 430.5,530.3 422.0,542.4" fill="none" stroke="#e2ddd5" stroke-width="0.8"/>
<polyline points="180.2,261.4 170.5,262.4 160.8,262.7 151.2,261.3 141.5,261.2" fill="none" stroke="#e2ddd5" stroke-width="0.8"/>
<polyline points="295.3,250.2 296.7,265.4 295.4,280.6 291.2,295.4 290.7,310.7" fill="none" stroke="#e2ddd5" stroke-width="0.8"/>
<polyline points="163.8,428.6 148.6,433.0 135.0,441.0 121.9,449.8 107.2,455.6" fill="none" stroke="#e2ddd5" stroke-width="0.8"/>
<polyline points="600.9,485.1 589.5,488.4 578.9,493.6 568.2,498.7 557.1,502.8" fill="none" stroke="#e2ddd5" stroke-width="0.8"/>
<polyline points="664.8,433.3 655.8,452.2 646.4,470.8 641.5,491.1 633.8,510.5" fill="none" stroke="#e2ddd5" stroke-width="0.8"/>
<polyline points="274.1,510.0 270.7,522.4 268.8,535.0 266.1,547.6 262.1,559.7" fill="none" stroke="#e2ddd5" stroke-width="0.8"/>
<polyline points="207.8,181.2 207.4,198.9 209.5,216.5 210.7,234.2 216.1,251.0" fill="none" stroke="#e2ddd5" stroke-width="0.8"/>
<polyline points="312.1,332.3 293.4,331.1 274.6,330.2 255.9,331.7 237.5,335.6" fill="none" stroke="#e2ddd5" stroke-width="0.8"/>
<polyline points="675.3,426.7 679.8,433.2 683.7,440.0 687.9,446.7 692.8,452.8" fill="none" stroke="#e2ddd5" stroke-width="0.8"/>
<polyline points="513.7,512.0 520.2,516.8 527.0,521.3 533.2,526.4 540.2,530.6" fill="none" stroke="#e2ddd5" stroke-width="0.8"/>
<polyline points="585.2,440.0 582.4,450.8 580.7,461.7 577.3,472.3 575.3,483.2" fill="none" stroke="#e2ddd5" stroke-width="0.8"/>
<polyline points="268.0,448.3 282.6,467.6 299.9,484.4 319.5,498.6 339.6,512.0" fill="none" stroke="#e2ddd5" stroke-width="0.8"/>
<polyline points="512.6,521.2 526.2,525.6 538.5,533.2 551.9,538.5 566.1,540.6" fill="none" stroke="#e2ddd5" stroke-width="0.8"/>
<polyline points="179.1,306.2 156.6,310.9 133.7,309.8 111.5,303.9 88.9,299.9" fill="none" stroke="#e2ddd5" stroke-width="0.8"/>
<polyline points="248.2,516.2 242.1,521.5 236.4,527.1 231.0,533.1 226.1,539.5" fill="none" stroke="#e2ddd5" stroke-width="0.8"/>
<polyline points="239.3,155.1 245.4,167.3 253.7,178.2 259.2,190.6 266.5,202.2" fill="none" stroke="#e2ddd5" stroke-width="0.8"/>
<polyline points="342.5,471.9 331.8,482.6 321.3,493.4 311.5,504.8 299.5,514.0" fill="none" stroke="#e2ddd5" stroke-width="0.8"/>
<polyline points="252.4,295.0 244.9,297.9 237.0,299.5 229.0,300.2 221.4,302.6" fill="none" stroke="#e2ddd5" stroke-width="0.8"/>
<polyline points="165.2,178.2 153.3,179.7 141.3,178.9 129.3,179.0 117.4,180.5" fill="none" stroke="#e2ddd5" stroke-width="0.8"/>
<polyline points="673.7,392.8 688.6,406.2 704.9,417.8 723.6,425.1 741.2,434.7" fill="none" stroke="#e2ddd5" stroke-width="0.8"/>
<polyline points="651.0,399.4 643.4,401.8 635.9,404.3 628.0,405.1 620.2,404.0" fill="none" stroke="#e2ddd5" stroke-width="0.8"/>
<polyline points="359.0,251.2 359.1,267.3 361.7,283.2 361.9,299.3 360.2,315.4" fill="none" stroke="#e2ddd5" stroke-width="0.8"/>
<polyline points="599.3,453.1 596.1,465.9 593.8,478.9 589.6,491.5 588.2,504.7" fill="none" stroke="#e2ddd5" stroke-width="0.8"/>
<polyline points="254.7,445.4 262.1,449.8 269.4,454.5 277.0,458.5 283.5,464.2" fill="none" stroke="#e2ddd5" stroke-width="0.8"/>
<polyline points="632.8,536.3 640.0,541.6 647.3,546.9 654.0,552.9 660.8,558.7" fill="none" stroke="#e2ddd5" stroke-width="0.8"/>
<polyline points="275.0,315.3 265.8,332.2 253.7,347.3 240.4,361.3 230.0,377.6" fill="none" stroke="#e2ddd5" stroke-width="0.8"/>
<polyline points="609.3,267.7 604.8,281.0 602.3,294.8 601.6,308.8 602.6,322.8" fill="none" stroke="#e2ddd5" stroke-width="0.8"/>
<polyline points="230.5,496.2 227.9,509.1 222.3,521.1 216.6,533.0 212.6,545.6" fill="none" stroke="#e2ddd5" stroke-width="0.8"/>
<polyline points="591.5,406.8 582.2,407.2 572.9,406.1 564.0,403.5 555.9,399.1" fill="none" stroke="#e2ddd5" stroke-width="0.8"/>
<polyline points="168.2,267.7 177.1,273.9 185.7,280.4 192.7,288.7 200.2,296.5" fill="none" stroke="#e2ddd5" stroke-width="0.8"/>
<polyline points="623.2,327.8 633.9,346.0 648.0,361.8 661.3,378.2 673.5,395.4" fill="none" stroke="#e2ddd5" stroke-width="0.8"/>
<polyline points="265.9,296.7 276.4,300.2 286.7,304.2 296.7,309.0 307.3,312.3" fill="none" stroke="#e2ddd5" stroke-width="0.8"/>
<polyline points="152.3,280.6 147.4,290.2 144.1,300.4 139.3,310.0 134.2,319.5" fill="none" stroke="#e2ddd5" stroke-width="0.8"/>
<polyline points="180.9,193.2 185.3,209.8 192.9,225.1 203.0,238.9 211.8,253.7" fill="none" stroke="#e2ddd5" stroke-width="0.8"/>
<polyline points="371.8,263.6 387.3,282.2 402.3,301.2 418.5,319.1 435.5,336.3" fill="none" stroke="#e2ddd5" stroke-width="0.8"/>
<polyline points="622.2,539.7 625.6,550.1 630.5,559.9 637.6,568.2 642.9,577.8" fill="none" stroke="#e2ddd5" stroke-width="0.8"/>
<polyline points="379.5,471.5 386.6,493.3 397.2,513.6 412.5,530.8 427.2,548.4" fill="none" stroke="#e2ddd5" stroke-width="0.8"/>
<polyline points="499.0,506.1 517.0,510.0 534.9,514.0 553.3,514.7 571.6,513.5" fill="none" stroke="#e2ddd5" stroke-width="0.8"/>
<polyline points="433.2,512.2 447.3,519.8 459.3,530.5 472.8,539.3 487.7,545.4" fill="none" stroke="#e2ddd5" stroke-width="0.8"/>
<polyline points="665.6,531.5 664.3,539.9 663.4,548.3 660.9,556.3 657.9,564.2" fill="none" stroke="#e2ddd5" stroke-width="0.8"/>
<polyline points="600.3,216.0 591.8,223.5 582.1,229.5 571.5,233.7 561.7,239.6" fill="none" stroke="#e2ddd5" stroke-width="0.8"/>
<polyline points="266.2,308.7 268.1,322.8 271.7,336.5 273.8,350.6 273.0,364.8" fill="none" stroke="#e2ddd5" stroke-width="0.8"/>
<polyline points="168.6,371.6 161.9,376.2 156.1,382.0 150.0,387.4 143.8,392.7" fill="none" stroke="#e2ddd5" stroke-width="0.8"/>
<polyline points="491.5,272.5 496.5,289.5 500.2,306.8 504.3,324.0 509.0,341.1" fill="none" stroke="#e2ddd5" stroke-width="0.8"/>
<polyline points="158.9,393.5 157.7,405.1 155.0,416.4 152.5,427.7 151.8,439.3" fill="none" stroke="#e2ddd5" stroke-width="0.8"/>
<polyline points="406.7,195.4 421.5,198.4 436.3,201.0 451.1,203.6 466.1,202.8" fill="none" stroke="#e2ddd5" stroke-width="0.8"/>
<polyline points="496.7,185.8 482.5,201.4 472.0,219.8 461.6,238.1 452.3,257.1" fill="none" stroke="#e2ddd5" stroke-width="0.8"/>
<polyline points="669.9,206.7 646.4,214.9 621.8,219.2 598.2,227.3 573.4,229.4" fill="none" stroke="#e2ddd5" stroke-width="0.8"/>
<polyline points="417.0,524.2 406.7,525.5 396.4,524.5 386.1,525.7 375.9,527.7" fill="none" stroke="#e2ddd5" stroke-width="0.8"/>
<polyline points="562.7,215.4 550.5,217.5 538.9,221.7 527.3,225.8 515.1,227.5" fill="none" stroke="#e2ddd5" stroke-width="0.8"/>
<polyline points="260.8,255.7 263.5,268.5 268.3,280.7 275.0,291.9 279.2,304.3" fill="none" stroke="#e2ddd5" stroke-width="0.8"/>
<polyline points="520.5,500.5 540.5,507.6 560.5,514.9 579.8,523.6 599.8,530.9" fill="none" stroke="#e2ddd5" stroke-width="0.8"/>
<polyline points="627.0,368.9 624.5,414.4 611.1,457.9 594.8,500.5 580.8,543.9" fill="none" stroke="#f3dcae" stroke-width="1.0"/>
<polyline points="585.5,256.5 551.5,259.9 517.4,258.7 483.3,258.6 449.5,264.0" fill="none" stroke="#f3dcae" stroke-width="1.0"/>
<polyline points="555.7,172.7 536.4,183.2 515.1,188.7 493.5,193.3 471.7,196.2" fill="none" stroke="#f3dcae" stroke-width="1.0"/>
<polyline points="318.3,154.7 336.1,157.7 354.1,160.0 372.0,162.5 389.1,168.4" fill="none" stroke="#f3dcae" stroke-width="1.0"/>
<polyline points="218.7,241.9 215.7,254.9 213.6,268.1 214.0,281.4 215.5,294.7" fill="none" stroke="#f3dcae" stroke-width="1.0"/>
<polyline points="269.6,379.8 262.8,398.8 256.3,417.9 253.3,437.9 246.2,456.7" fill="none" stroke="#f3dcae" stroke-width="1.0"/>
<polyline points="280.2,211.8 312.4,228.8 341.9,250.2 372.4,270.1 405.0,286.3" fill="none" stroke="#f3dcae" stroke-width="1.0"/>
<polyline points="152.3,403.6 145.5,428.3 139.4,453.2 128.1,476.2 114.1,497.7" fill="none" stroke="#f3dcae" stroke-width="1.0"/>
<polyline points="282.9,503.7 315.2,506.6 347.6,505.3 379.0,497.0 411.2,493.0" fill="none" stroke="#f3dcae" stroke-width="1.0"/>
<polyline points="152.8,367.2 136.0,373.1 118.8,378.0 101.7,382.9 84.2,386.6" fill="none" stroke="#f3dcae" stroke-width="1.0"/>
<polyline points="594.2,221.6 611.6,237.7 625.6,256.9 636.8,277.9 645.6,300.0" fill="none" stroke="#f3dcae" stroke-width="1.0"/>
<polyline points="149.5,480.8 126.2,499.6 103.4,519.0 83.4,541.3 68.2,567.1" fill="none" stroke="#f3dcae" stroke-width="1.0"/>
<polyline points="274.0,169.0 290.5,206.1 300.4,245.5 306.1,285.7 316.5,325.0" fill="none" stroke="#f3dcae" stroke-width="1.0"/>
<polyline points="451.1,322.8 428.3,345.4 404.0,366.3 375.5,381.1 349.3,399.8" fill="none" stroke="#f3dcae" stroke-width="1.0"/>
<polyline points="630.9,159.9 643.5,177.1 652.0,196.7 658.0,217.2 665.8,237.1" fill="none" stroke="#f3dcae" stroke-width="1.0"/>
<polyline points="631.0,281.2 662.8,315.1 691.3,351.9 716.6,390.9 731.9,434.9" fill="none" stroke="#f3dcae" stroke-width="1.0"/>
<polyline points="404.7,479.0 379.9,516.1 351.0,550.2 321.0,583.3 294.3,619.1" fill="none" stroke="#f3dcae" stroke-width="1.0"/>
<polyline points="262.8,395.0 309.3,398.1 355.3,390.2 398.9,373.5 445.0,366.4" fill="none" stroke="#f3dcae" stroke-width="1.0"/>
<polyline points="336.0,208.9 349.8,211.5 363.5,215.0 376.6,219.9 389.2,226.3" fill="none" stroke="#f3dcae" stroke-width="1.0"/>
<polyline points="182.2,382.5 193.7,424.1 196.9,467.2 209.3,508.5 213.9,551.4" fill="none" stroke="#f3dcae" stroke-width="1.0"/>
<polyline points="649.8,519.5 669.8,522.3 690.0,520.5 710.1,522.2 729.8,527.0" fill="none" stroke="#f3dcae" stroke-width="1.0"/>
<polyline points="495.4,473.3 490.5,496.0 490.2,519.3 487.0,542.4 487.1,565.6" fill="none" stroke="#f3dcae" stroke-width="1.0"/>
<polyline points="321.8,318.0 344.0,317.0 366.0,318.5 388.2,318.5 410.2,316.5" fill="none" stroke="#f3dcae" stroke-width="1.0"/>
<polyline points="677.2,348.9 649.9,372.0 623.7,396.2 598.2,421.2 569.6,442.5" fill="none" stroke="#f3dcae" stroke-width="1.0"/>
<polyline points="337.1,426.7 331.0,446.4 329.0,466.9 323.8,486.9 321.9,507.4" fill="none" stroke="#f3dcae" stroke-width="1.0"/>
<polyline points="146.7,232.2 119.9,273.4 93.4,314.8 66.9,356.3 34.7,393.4" fill="none" stroke="#f3dcae" stroke-width="1.0"/>
<polyline points="247.7,345.4 272.3,381.5 288.5,422.1 308.9,460.7 334.6,496.1" fill="none" stroke="#f3dcae" stroke-width="1.0"/>
<polyline points="531.4,346.8 567.4,351.8 602.4,361.8 636.2,375.2 667.7,393.4" fill="none" stroke="#f3dcae" stroke-width="1.0"/>
<polyline points="492.0,291.6 495.1,318.7 503.8,344.6 507.2,371.7 517.0,397.2" fill="none" stroke="#f3dcae" stroke-width="1.0"/>
<polyline points="259.6,255.9 230.4,267.2 199.6,272.8 169.8,282.4 140.2,292.5" fill="none" stroke="#f3dcae" stroke-width="1.0"/>
<polyline points="438.9,446.0 414.7,473.6 393.0,503.3 376.7,536.2 355.0,565.8" fill="none" stroke="#f3dcae" stroke-width="1.0"/>
<polyline points="510.8,441.1 533.5,459.1 555.5,478.0 580.6,492.4 606.0,506.4" fill="none" stroke="#f3dcae" stroke-width="1.0"/>
<polyline points="633.7,246.1 651.9,261.5 667.1,279.8 685.3,295.1 705.8,307.2" fill="none" stroke="#f3dcae" stroke-width="1.0"/>
<polyline points="282.4,280.4 282.7,298.9 285.9,317.2 284.7,335.7 281.3,353.9" fill="none" stroke="#f3dcae" stroke-width="1.0"/>
<polyline points="202.1,526.4 224.9,540.8 245.3,558.3 263.6,578.0 282.4,597.2" fill="none" stroke="#f3dcae" stroke-width="1.0"/>
<polyline points="254.1,400.9 273.6,406.5 293.8,407.4 314.0,407.4 334.1,410.2" fill="none" stroke="#f3dcae" stroke-width="1.0"/>
<polyline points="528.1,347.7 521.1,376.7 512.6,405.4 505.4,434.4 494.9,462.3" fill="none" stroke="#f3dcae" stroke-width="1.0"/>
<polyline points="646.3,320.4 638.5,360.3 636.2,400.8 629.4,440.8 615.2,478.8" fill="none" stroke="#f3dcae" stroke-width="1.0"/>
<polyline points="572.5,424.9 537.4,439.5 502.7,454.8 469.5,473.3 435.2,489.7" fill="none" stroke="#f3dcae" stroke-width="1.0"/>
<polyline points="199.9,316.4 168.0,339.1 139.1,365.7 111.2,393.4 84.0,421.6" fill="none" stroke="#f3dcae" stroke-width="1.0"/>
<polyline points="488.5,312.4 470.4,356.2 448.9,398.5 421.9,437.3 397.0,477.7" fill="none" stroke="#f3dcae" stroke-width="1.0"/>
<polyline points="415.9,531.2 448.7,529.5 481.5,532.5 512.8,542.6 544.0,553.0" fill="none" stroke="#f3dcae" stroke-width="1.0"/>
<polyline points="201.7,376.4 196.4,415.4 188.4,454.0 174.2,490.7 159.6,527.3" fill="none" stroke="#f3dcae" stroke-width="1.0"/>
<polyline points="372.1,520.9 403.5,542.6 431.7,568.3 464.3,588.2 491.1,615.3" fill="none" stroke="#f3dcae" stroke-width="1.0"/>
<polyline points="341.9,175.9 364.3,191.9 387.3,206.9 410.9,221.0 433.0,237.3" fill="none" stroke="#f3dcae" stroke-width="1.0"/>
<polyline points="340.0,256.6 364.3,288.8 388.1,321.3 416.2,350.2 439.7,382.9" fill="none" stroke="#f3dcae" stroke-width="1.0"/>
<polyline points="362.0,236.0 397.2,258.2 430.9,282.7 464.9,306.6 498.2,331.6" fill="none" stroke="#f3dcae" stroke-width="1.0"/>
<polyline points="270.5,527.0 281.4,561.8 286.6,597.9 292.4,633.9 301.9,669.1" fill="none" stroke="#f3dcae" stroke-width="1.0"/>
<polyline points="448.1,202.4 423.8,211.2 400.7,222.7 378.4,235.7 357.9,251.3" fill="none" stroke="#f3dcae" stroke-width="1.0"/>
<polyline points="380.8,225.9 420.1,222.0 458.7,213.0 496.2,200.3 533.5,187.2" fill="none" stroke="#f3dcae" stroke-width="1.0"/>
<polyline points="382.1,400.6 365.0,420.3 344.7,436.7 328.5,457.2 309.2,474.7" fill="none" stroke="#f3dcae" stroke-width="1.0"/>
<polyline points="645.1,457.4 683.3,478.7 725.4,490.1 769.1,491.0 811.4,501.7" fill="none" stroke="#f3dcae" stroke-width="1.0"/>
<polyline points="507.4,250.8 525.0,254.1 541.9,259.7 559.2,264.1 577.0,265.4" fill="none" stroke="#f3dcae" stroke-width="1.0"/>
<polyline points="644.2,460.4 682.5,485.6 717.0,516.0 748.7,549.1 773.4,587.8" fill="none" stroke="#f3dcae" stroke-width="1.0"/>
<polyline points="580.2,478.6 611.2,501.5 639.2,527.9 668.0,553.4 691.4,583.9" fill="none" stroke="#f3dcae" stroke-width="1.0"/>
<polyline points="451.8,256.4 465.0,268.2 480.5,276.9 496.1,285.3 512.9,290.8" fill="none" stroke="#f3dcae" stroke-width="1.0"/>
<polyline points="416.7,346.8 422.2,391.3 420.1,436.1 418.6,481.0 415.8,525.7" fill="none" stroke="#f3dcae" stroke-width="1.0"/>
<polyline points="512.6,479.3 517.1,507.1 527.5,533.4 536.0,560.3 542.6,587.7" fill="none" stroke="#f3dcae" stroke-width="1.0"/>
<polyline points="161.7,389.9 139.4,431.8 107.8,467.2 76.0,502.4 44.5,537.8" fill="none" stroke="#f3dcae" stroke-width="1.0"/>
<polyline points="640.6,167.1 620.1,196.7 594.7,222.1 571.0,249.2 547.7,276.5" fill="none" stroke="#f3dcae" stroke-width="1.0"/>
<polyline points="435.6,452.2 459.0,469.0 481.9,486.5 501.7,507.4 523.6,526.2" fill="none" stroke="#f3dcae" stroke-width="1.0"/>
<polyline points="602.1,310.2 601.7,332.9 596.1,354.9 588.7,376.4 578.3,396.5" fill="none" stroke="#f3dcae" stroke-width="1.0"/>
<polyline points="328.3,276.7 346.7,305.9 360.8,337.4 381.8,364.8 399.5,394.4" fill="none" stroke="#f3dcae" stroke-width="1.0"/>
<polyline points="634.0,365.1 657.6,362.9 680.7,357.1 704.4,356.3 728.2,356.8" fill="none" stroke="#f3dcae" stroke-width="1.0"/>
<polyline points="508.6,459.4 474.0,467.3 439.0,473.0 403.7,475.2 368.2,475.7" fill="none" stroke="#f3dcae" stroke-width="1.0"/>
<polyline points="521.2,236.2 503.1,259.8 490.0,286.4 481.3,314.7 479.4,344.4" fill="none" stroke="#f3dcae" stroke-width="1.0"/>
<polyline points="572.8,507.8 556.8,528.7 538.0,547.2 518.7,565.0 501.7,585.1" fill="none" stroke="#f3dcae" stroke-width="1.0"/>
<polyline points="312.4,317.2 326.1,342.4 334.1,369.9 348.0,395.0 361.0,420.5" fill="none" stroke="#f3dcae" stroke-width="1.0"/>
<polyline points="167.7,200.0 136.1,212.8 104.9,226.5 77.9,247.3 52.2,269.6" fill="none" stroke="#f3dcae" stroke-width="1.0"/>
<polyline points="472.2,516.9 442.0,520.1 413.1,529.1 383.5,536.0 355.3,547.1" fill="none" stroke="#f3dcae" stroke-width="1.0"/>
<polyline points="229.6,160.0 267.2,153.4 305.3,155.7 343.0,150.1 381.1,151.5" fill="none" stroke="#f3dcae" stroke-width="1.0"/>
<polyline points="217.1,160.9 201.5,175.8 188.4,193.0 179.5,212.7 168.0,231.0" fill="none" stroke="#f3dcae" stroke-width="1.0"/>
<polyline points="539.2,485.1 528.1,496.1 515.9,506.0 503.9,516.1 490.1,523.4" fill="none" stroke="#f3dcae" stroke-width="1.0"/>
<polyline points="286.0,527.2 280.5,538.9 274.1,550.1 266.0,560.2 260.3,571.8" fill="none" stroke="#f3dcae" stroke-width="1.0"/>
<polyline points="317.4,436.3 356.4,458.3 399.2,471.3 442.9,481.5 486.1,493.2" fill="none" stroke="#f3dcae" stroke-width="1.0"/>
<polyline points="387.7,416.0 427.0,431.9 465.0,450.7 501.7,472.0 539.3,491.7" fill="none" stroke="#f3dcae" stroke-width="1.0"/>
<polyline points="358.5,458.3 317.0,464.1 276.3,474.2 238.8,492.9 198.0,502.3" fill="none" stroke="#f3dcae" stroke-width="1.0"/>
<polyline points="533.5,474.2 543.5,508.0 547.9,542.9 550.4,578.0 556.3,612.8" fill="none" stroke="#f3dcae" stroke-width="1.0"/>
<polyline points="382.1,497.7 394.7,533.7 400.0,571.6 399.4,609.7 403.0,647.8" fill="none" stroke="#f3dcae" stroke-width="1.0"/>
<polyline points="146.9,255.8 149.9,290.2 146.1,324.5 150.3,358.7 148.7,393.2" fill="none" stroke="#f3dcae" stroke-width="1.0"/>
<polyline points="593.3,489.6 584.4,510.6 572.4,529.9 558.6,548.1 541.5,563.0" fill="none" stroke="#f3dcae" stroke-width="1.0"/>
<polyline points="337.1,186.9 336.3,229.3 330.2,271.3 315.3,311.0 305.8,352.3" fill="none" stroke="#f3dcae" stroke-width="1.0"/>
<polyline points="480.4,416.3 485.0,436.0 487.2,456.1 486.4,476.3 486.0,496.6" fill="none" stroke="#f3dcae" stroke-width="1.0"/>
<polyline points="194.3,466.1 177.8,479.4 158.9,489.2 138.5,495.2 118.1,500.9" fill="none" stroke="#f3dcae" stroke-width="1.0"/>
<polyline points="408.6,382.1 426.5,390.4 443.4,400.4 461.0,409.3 478.4,418.7" fill="none" stroke="#f3dcae" stroke-width="1.0"/>
<polyline points="367.8,354.2 378.5,363.5 389.7,372.1 402.4,378.3 414.7,385.4" fill="none" stroke="#f3dcae" stroke-width="1.0"/>
<polyline points="579.8,214.4 571.9,238.6 570.0,264.0 574.0,289.1 571.8,314.4" fill="none" stroke="#f3dcae" stroke-width="1.0"/>
<polyline points="623.2,342.2 615.5,363.2 608.7,384.4 597.3,403.5 583.4,421.0" fill="none" stroke="#f3dcae" stroke-width="1.0"/>
<polyline points="597.2,526.9 608.3,535.3 620.6,541.8 633.9,545.7 647.8,546.4" fill="none" stroke="#f3dcae" stroke-width="1.0"/>
<polyline points="453.1,490.9 449.6,538.8 456.5,586.4 461.0,634.2 468.0,681.7" fill="none" stroke="#f3dcae" stroke-width="1.0"/>
<polyline points="212.1,525.2 233.6,551.2 248.6,581.3 261.1,612.5 275.2,643.1" fill="none" stroke="#f3dcae" stroke-width="1.0"/>
<polyline points="393.0,215.8 344.9,227.9 300.7,250.8 259.7,278.8 220.8,309.8" fill="none" stroke="#f3dcae" stroke-width="1.0"/>
<polyline points="643.4,504.1 630.1,509.2 616.3,512.9 602.3,515.6 588.1,514.9" fill="none" stroke="#f3dcae" stroke-width="1.0"/>
<polyline points="176.7,210.0 139.7,240.1 105.8,273.7 70.4,305.8 31.2,333.0" fill="none" stroke="#f3dcae" stroke-width="1.0"/>
<polyline points="204.1,279.4 216.1,291.6 229.9,301.8 244.9,310.0 261.2,315.5" fill="none" stroke="#f3dcae" stroke-width="1.0"/>
<polyline points="519.4,158.9 510.8,176.7 498.5,192.3 488.6,209.5 475.2,224.1" fill="none" stroke="#f3dcae" stroke-width="1.0"/>
<polyline points="623.6,497.9 652.0,504.8 678.4,517.6 702.1,534.7 724.8,553.3" fill="none" stroke="#f3dcae" stroke-width="1.0"/>
<polyline points="395.2,285.5 368.4,299.9 344.6,318.7 323.6,340.8 308.0,366.8" fill="none" stroke="#f3dcae" stroke-width="1.0"/>
<polyline points="539.3,368.2 581.9,383.1 625.1,396.2 669.9,401.7 715.1,402.0" fill="none" stroke="#f3dcae" stroke-width="1.0"/>
<polyline points="608.6,283.5 636.6,296.5 661.5,314.9 689.4,328.2 713.3,347.8" fill="none" stroke="#f3dcae" stroke-width="1.0"/>
<polyline points="177.3,500.4 167.2,518.1 159.1,536.8 153.3,556.4 150.4,576.6" fill="none" stroke="#f3dcae" stroke-width="1.0"/>
<polyline points="346.7,537.5 300.5,547.2 255.6,561.7 208.8,567.1 164.2,582.7" fill="none" stroke="#f3dcae" stroke-width="1.0"/>
<polyline points="546.3,267.6 533.2,266.5 520.1,266.4 507.2,268.6 495.3,274.0" fill="none" stroke="#f3dcae" stroke-width="1.0"/>
<polyline points="604.6,357.8 624.9,378.3 647.8,395.7 670.1,413.9 695.4,427.8" fill="none" stroke="#f3dcae" stroke-width="1.0"/>
<polyline points="245.3,452.2 236.5,470.0 231.6,489.3 225.7,508.3 219.8,527.3" fill="none" stroke="#f3dcae" stroke-width="1.0"/>
<polyline points="296.9,233.7 277.9,267.8 257.5,301.1 242.2,337.0 235.0,375.4" fill="none" stroke="#f3dcae" stroke-width="1.0"/>
<polyline points="549.7,311.9 538.8,321.5 528.6,332.0 516.8,340.6 503.7,346.9" fill="none" stroke="#f3dcae" stroke-width="1.0"/>
<polyline points="417.7,160.0 387.4,162.9 357.7,169.3 329.4,180.3 299.7,186.4" fill="none" stroke="#f3dcae" stroke-width="1.0"/>
<polyline points="348.3,217.3 369.4,244.9 390.3,272.8 411.9,300.1 433.3,327.5" fill="none" stroke="#f3dcae" stroke-width="1.0"/>
<polyline points="212.5,430.5 177.2,458.3 139.1,482.2 102.5,508.3 62.9,529.6" fill="none" stroke="#f3dcae" stroke-width="1.0"/>
<polyline points="179.7,491.8 149.0,496.0 118.1,499.8 87.3,503.0 58.0,513.5" fill="none" stroke="#f3dcae" stroke-width="1.0"/>
<polyline points="679.1,240.6 693.8,247.7 707.2,257.0 722.5,262.9 738.6,265.7" fill="none" stroke="#f3dcae" stroke-width="1.0"/>
<polyline points="531.1,229.5 566.0,232.8 600.7,236.4 635.0,243.6 669.9,243.9" fill="none" stroke="#f3dcae" stroke-width="1.0"/>
<polyline points="625.1,431.5 642.1,433.9 659.0,436.3 676.1,436.8 693.0,434.0" fill="none" stroke="#f3dcae" stroke-width="1.0"/>
<polyline points="369.5,207.0 364.5,251.5 357.9,295.8 345.9,339.0 341.2,383.5" fill="none" stroke="#f3dcae" stroke-width="1.0"/>
<polyline points="601.1,516.8 606.2,544.7 610.9,572.5 617.0,600.1 617.0,628.4" fill="none" stroke="#f3dcae" stroke-width="1.0"/>
<polyline points="574.1,285.0 592.9,301.6 607.2,322.2 618.2,344.7 624.4,369.0" fill="none" stroke="#f3dcae" stroke-width="1.0"/>
<polyline points="595.1,482.0 624.5,494.4 650.6,512.8 678.7,527.7 707.5,541.6" fill="none" stroke="#f3dcae" stroke-width="1.0"/>
<polyline points="494.6,295.0 493.7,310.1 492.7,325.2 495.3,340.0 500.5,354.2" fill="none" stroke="#f3dcae" stroke-width="1.0"/>
<polyline points="680.3,454.5 644.1,456.1 608.2,450.7 574.1,438.6 538.1,434.7" fill="none" stroke="#f3dcae" stroke-width="1.0"/>
<polyline points="499.5,256.9 487.0,275.9 470.8,291.8 453.6,306.8 438.4,323.7" fill="none" stroke="#f3dcae" stroke-width="1.0"/>
<polyline points="432.7,321.8 410.1,327.6 387.2,331.8 365.5,340.1 343.4,347.5" fill="none" stroke="#f3dcae" stroke-width="1.0"/>
<polyline points="672.8,352.8 692.4,375.6 715.6,394.5 742.0,408.8 770.5,418.0" fill="none" stroke="#f3dcae" stroke-width="1.0"/>
<polyline points="307.8,311.3 324.3,325.3 340.5,339.6 354.1,356.4 366.7,374.0" fill="none" stroke="#f3dcae" stroke-width="1.0"/>
<polyline points="460.2,405.7 492.2,428.2 523.7,451.5 553.8,476.5 584.3,501.0" fill="none" stroke="#f3dcae" stroke-width="1.0"/>
<polyline points="317.1,247.8 342.6,266.6 367.2,286.6 396.0,300.0 425.6,311.3" fill="none" stroke="#f3dcae" stroke-width="1.0"/>
<polyline points="620.9,246.3 618.7,277.2 609.2,306.6 602.7,336.8 592.1,365.9" fill="none" stroke="#f3dcae" stroke-width="1.0"/>
<polyline points="233.4,179.9 209.8,196.8 187.3,215.0 165.3,233.9 141.2,250.1" fill="none" stroke="#f3dcae" stroke-width="1.0"/>
<polyline points="206.2,241.1 167.8,253.0 130.5,268.0 94.4,285.7 56.9,300.2" fill="none" stroke="#f3dcae" stroke-width="1.0"/>
<polyline points="485.6,482.9 456.7,496.6 426.4,506.7 395.1,512.7 363.9,519.2" fill="none" stroke="#f3dcae" stroke-width="1.0"/>
<polyline points="578.5,428.2 561.3,429.6 545.0,435.2 528.0,438.6 510.9,441.3" fill="none" stroke="#f3dcae" stroke-width="1.0"/>
<polyline points="420.3,526.6 410.2,552.9 395.4,576.8 379.3,599.9 364.6,624.0" fill="none" stroke="#f3dcae" stroke-width="1.0"/>
<polyline points="395.2,331.2 381.1,350.0 366.4,368.3 352.8,387.5 341.0,407.8" fill="none" stroke="#f3dcae" stroke-width="1.0"/>
<polyline points="579.7,482.8 584.3,511.6 591.7,539.8 604.0,566.2 615.3,593.1" fill="none" stroke="#f3dcae" stroke-width="1.0"/>
<polyline points="466.5,188.0 441.9,190.0 417.3,187.8 393.9,180.0 369.7,175.8" fill="none" stroke="#f3dcae" stroke-width="1.0"/>
<polyline points="381.0,506.4 395.2,507.3 409.5,508.3 423.2,512.1 436.3,517.8" fill="none" stroke="#f3dcae" stroke-width="1.0"/>
<polyline points="442.7,540.4 438.0,571.9 435.1,603.7 434.4,635.6 432.2,667.4" fill="none" stroke="#f3dcae" stroke-width="1.0"/>
<polyline points="339.5,520.8 328.3,551.0 319.1,581.9 311.4,613.1 302.7,644.2" fill="none" stroke="#f3dcae" stroke-width="1.0"/>
<polyline points="462.3,494.5 431.9,498.8 401.2,501.3 370.9,496.1 340.3,493.3" fill="none" stroke="#f3dcae" stroke-width="1.0"/>
<polyline points="438.1,469.7 455.5,486.9 470.0,506.6 484.3,526.4 502.2,543.0" fill="none" stroke="#f3dcae" stroke-width="1.0"/>
<polyline points="638.9,421.0 592.6,438.9 547.1,458.7 505.6,485.9 467.2,517.4" fill="none" stroke="#f3dcae" stroke-width="1.0"/>
<polyline points="427.9,349.4 443.2,361.2 457.9,373.8 473.5,385.2 485.8,400.1" fill="none" stroke="#f3dcae" stroke-width="1.0"/>
<polyline points="496.7,170.4 512.1,209.5 523.7,249.9 544.9,286.2 569.5,320.3" fill="none" stroke="#f3dcae" stroke-width="1.0"/>
<polyline points="610.0,380.9 600.0,398.0 589.6,414.9 581.2,433.0 571.5,450.3" fill="none" stroke="#f3dcae" stroke-width="1.0"/>
<polyline points="438.9,539.9 437.6,567.8 441.1,595.5 441.1,623.4 446.4,650.8" fill="none" stroke="#f3dcae" stroke-width="1.0"/>
<polyline points="201.2,220.0 195.7,263.0 183.7,304.7 181.0,348.0 188.8,390.6" fill="none" stroke="#f3dcae" stroke-width="1.0"/>
<polyline points="570.6,278.9 558.0,301.4 548.1,325.2 543.1,350.5 533.1,374.2" fill="none" stroke="#f3dcae" stroke-width="1.0"/>
<polyline points="466.8,289.0 476.8,314.1 481.8,340.6 485.7,367.2 483.3,394.1" fill="none" stroke="#f3dcae" stroke-width="1.0"/>
<polyline points="388.2,394.0 395.9,405.9 401.3,419.0 408.0,431.5 412.0,445.0" fill="none" stroke="#f3dcae" stroke-width="1.0"/>
<polyline points="595.6,271.5 580.3,317.6 555.2,359.0 535.6,403.4 518.4,448.8" fill="none" stroke="#f3dcae" stroke-width="1.0"/>
<polyline points="541.9,239.7 562.9,270.0 579.3,303.0 599.8,333.7 625.0,360.6" fill="none" stroke="#c8c1b5" stroke-width="0.9" stroke-dasharray="3,1.5"/>
<polyline points="343.5,226.2 321.2,227.5 299.7,233.0 278.0,238.2 256.7,244.6" fill="none" stroke="#c8c1b5" stroke-width="0.9" stroke-dasharray="3,1.5"/>
<polyline points="368.2,179.3 402.1,190.3 437.1,196.9 472.7,198.0 508.3,195.2" fill="none" stroke="#c8c1b5" stroke-width="0.9" stroke-dasharray="3,1.5"/>
<polyline points="276.7,167.5 268.7,189.7 258.6,210.9 252.9,233.7 249.9,257.1" fill="none" stroke="#c8c1b5" stroke-width="0.9" stroke-dasharray="3,1.5"/>
<polyline points="606.1,203.5 607.0,239.4 614.0,274.6 623.6,309.2 629.2,344.6" fill="none" stroke="#c8c1b5" stroke-width="0.9" stroke-dasharray="3,1.5"/>
<polyline points="353.7,524.9 384.4,548.6 418.0,567.8 452.1,586.3 489.1,598.1" fill="none" stroke="#c8c1b5" stroke-width="0.9" stroke-dasharray="3,1.5"/>
<polyline points="535.3,254.9 507.7,266.0 481.8,280.4 455.1,293.4 430.6,310.1" fill="none" stroke="#c8c1b5" stroke-width="0.9" stroke-dasharray="3,1.5"/>
<polyline points="626.7,201.5 628.8,230.0 627.0,258.5 626.9,287.1 624.5,315.5" fill="none" stroke="#c8c1b5" stroke-width="0.9" stroke-dasharray="3,1.5"/>
<polyline points="458.8,274.3 467.1,289.3 472.7,305.5 479.7,321.1 485.4,337.3" fill="none" stroke="#c8c1b5" stroke-width="0.9" stroke-dasharray="3,1.5"/>
<polyline points="206.0,371.5 220.1,395.1 238.9,415.2 259.6,433.4 282.5,448.6" fill="none" stroke="#c8c1b5" stroke-width="0.9" stroke-dasharray="3,1.5"/>
<polyline points="215.5,431.4 227.1,453.6 235.5,477.3 239.2,502.1 238.5,527.1" fill="none" stroke="#c8c1b5" stroke-width="0.9" stroke-dasharray="3,1.5"/>
<polyline points="218.8,261.0 250.3,266.6 282.2,269.8 314.1,271.6 345.8,275.9" fill="none" stroke="#c8c1b5" stroke-width="0.9" stroke-dasharray="3,1.5"/>
<polyline points="531.3,250.1 509.5,259.8 489.6,272.8 472.5,289.3 452.3,302.0" fill="none" stroke="#c8c1b5" stroke-width="0.9" stroke-dasharray="3,1.5"/>
<polyline points="550.5,429.8 566.4,429.1 582.2,426.0 597.5,421.4 612.5,415.9" fill="none" stroke="#c8c1b5" stroke-width="0.9" stroke-dasharray="3,1.5"/>
<polyline points="167.6,274.3 156.5,290.4 144.9,306.0 131.7,320.3 120.3,336.1" fill="none" stroke="#c8c1b5" stroke-width="0.9" stroke-dasharray="3,1.5"/>
<polyline points="385.6,418.8 390.2,433.2 392.7,448.0 396.8,462.4 404.1,475.6" fill="none" stroke="#c8c1b5" stroke-width="0.9" stroke-dasharray="3,1.5"/>
<polyline points="616.6,389.1 637.7,388.1 658.7,390.2 679.8,389.3 700.7,392.7" fill="none" stroke="#c8c1b5" stroke-width="0.9" stroke-dasharray="3,1.5"/>
<polyline points="559.0,187.3 542.3,205.8 522.9,221.2 505.2,238.7 491.5,259.4" fill="none" stroke="#c8c1b5" stroke-width="0.9" stroke-dasharray="3,1.5"/>
<polyline points="667.4,318.1 635.3,321.3 603.1,319.2 571.1,315.0 539.0,311.6" fill="none" stroke="#c8c1b5" stroke-width="0.9" stroke-dasharray="3,1.5"/>
<polyline points="175.9,424.2 176.2,452.0 181.7,479.3 183.5,507.0 191.6,533.6" fill="none" stroke="#c8c1b5" stroke-width="0.9" stroke-dasharray="3,1.5"/>
<polyline points="533.2,465.8 547.3,490.8 559.7,516.6 571.5,542.7 586.5,567.1" fill="none" stroke="#c8c1b5" stroke-width="0.9" stroke-dasharray="3,1.5"/>
<polyline points="178.7,292.5 186.0,311.1 196.5,328.2 205.3,346.2 212.4,364.9" fill="none" stroke="#c8c1b5" stroke-width="0.9" stroke-dasharray="3,1.5"/>
<defs><filter id="bl" x="-20%" y="-20%" width="140%" height="140%"><feGaussianBlur stdDeviation="5"/></filter></defs>
<polygon points="216,172 270,165 346,182 422,168 470,160 470,180 422,195 346,205 300,215 270,225 216,190" fill="#cbc6bc" fill-opacity="0.28" filter="url(#bl)"/>
<polygon points="146,215 200,190 216,200 180,225 146,240" fill="#cdc8be" fill-opacity="0.22" filter="url(#bl)"/>
<polyline points="216.1,176.9 221.1,176.4 226.5,175.1 229.2,175.4 233.1,173.5 237.9,173.1 242.7,171.9 246.5,171.4 252.3,170.6 257.5,171.3 260.5,169.7 265.8,169.2 266.5,173.4 268.3,178.5 270.4,180.9 269.7,186.1 269.4,189.6 268.3,193.5 270.3,199.7 267.6,203.9 269.5,207.8 266.2,213.0 266.0,217.6 270.6,217.8 275.8,220.2 279.3,221.6 282.8,216.9 285.2,213.6 288.1,212.2 293.6,208.0 295.4,205.9 300.7,204.8 302.5,202.7 307.8,200.8 310.1,197.5 315.0,196.1 317.4,194.9 321.4,195.0 325.1,192.4 330.0,193.3 334.7,192.9 339.0,192.9 341.9,191.1 345.1,190.0 350.5,188.7 355.0,188.3 358.6,189.7 361.9,186.6 367.1,186.3 372.1,185.1 376.6,186.6 380.7,184.8 383.6,183.9 388.4,181.8 392.1,180.3 397.1,179.8 401.9,176.6 404.5,175.9 409.4,177.1 412.7,177.9 417.3,180.4 423.2,183.1 426.6,180.8 430.4,177.5 433.6,173.7 436.9,172.7 439.5,170.2 445.5,168.9 449.0,167.5 452.5,168.0 455.9,165.2 461.9,164.9 464.6,164.4 469.7,163.2 474.1,162.6 478.7,161.9 481.9,160.9 488.2,161.4 490.4,161.8 495.1,159.4 500.1,159.4 504.0,159.7 507.3,159.4 511.0,158.8 516.2,157.3 519.8,156.9 523.8,158.5 528.1,157.8 532.7,155.8 537.3,157.0 540.0,156.0" fill="none" stroke="#fbfaf7" stroke-width="2.8" stroke-opacity="0.7"/>
<polyline points="216.1,176.9 221.1,176.4 226.5,175.1 229.2,175.4 233.1,173.5 237.9,173.1 242.7,171.9 246.5,171.4 252.3,170.6 257.5,171.3 260.5,169.7 265.8,169.2 266.5,173.4 268.3,178.5 270.4,180.9 269.7,186.1 269.4,189.6 268.3,193.5 270.3,199.7 267.6,203.9 269.5,207.8 266.2,213.0 266.0,217.6 270.6,217.8 275.8,220.2 279.3,221.6 282.8,216.9 285.2,213.6 288.1,212.2 293.6,208.0 295.4,205.9 300.7,204.8 302.5,202.7 307.8,200.8 310.1,197.5 315.0,196.1 317.4,194.9 321.4,195.0 325.1,192.4 330.0,193.3 334.7,192.9 339.0,192.9 341.9,191.1 345.1,190.0 350.5,188.7 355.0,188.3 358.6,189.7 361.9,186.6 367.1,186.3 372.1,185.1 376.6,186.6 380.7,184.8 383.6,183.9 388.4,181.8 392.1,180.3 397.1,179.8 401.9,176.6 404.5,175.9 409.4,177.1 412.7,177.9 417.3,180.4 423.2,183.1 426.6,180.8 430.4,177.5 433.6,173.7 436.9,172.7 439.5,170.2 445.5,168.9 449.0,167.5 452.5,168.0 455.9,165.2 461.9,164.9 464.6,164.4 469.7,163.2 474.1,162.6 478.7,161.9 481.9,160.9 488.2,161.4 490.4,161.8 495.1,159.4 500.1,159.4 504.0,159.7 507.3,159.4 511.0,158.8 516.2,157.3 519.8,156.9 523.8,158.5 528.1,157.8 532.7,155.8 537.3,157.0 540.0,156.0" fill="none" stroke="#b3ada3" stroke-width="1.2"/>
<polyline points="303.8,206.4 306.2,208.9 309.4,214.3 310.7,217.5 312.4,221.5 312.7,226.7 312.5,231.5 313.4,235.0 315.0,239.7 315.8,244.4 316.1,248.6 316.6,253.7 315.1,257.6 316.0,261.9 317.3,266.3 316.3,269.4 318.3,275.2 317.3,277.1 316.1,281.6 315.0,287.8 312.9,292.4 313.4,295.0 311.2,299.9 313.7,304.5 312.7,307.3 313.6,313.6 314.6,317.3 315.7,321.9 316.8,324.8 318.0,330.0" fill="none" stroke="#fbfaf7" stroke-width="2.8" stroke-opacity="0.7"/>
<polyline points="303.8,206.4 306.2,208.9 309.4,214.3 310.7,217.5 312.4,221.5 312.7,226.7 312.5,231.5 313.4,235.0 315.0,239.7 315.8,244.4 316.1,248.6 316.6,253.7 315.1,257.6 316.0,261.9 317.3,266.3 316.3,269.4 318.3,275.2 317.3,277.1 316.1,281.6 315.0,287.8 312.9,292.4 313.4,295.0 311.2,299.9 313.7,304.5 312.7,307.3 313.6,313.6 314.6,317.3 315.7,321.9 316.8,324.8 318.0,330.0" fill="none" stroke="#b3ada3" stroke-width="1.2"/>
<polyline points="147.0,224.9 150.1,222.7 154.3,217.8 156.3,215.3 160.3,214.3 164.7,209.3 166.7,208.4 172.0,205.7 175.5,203.5 180.4,202.5 184.5,201.5 186.5,199.2 190.8,199.0 195.8,195.2 198.7,194.4 202.4,192.1 205.0,188.7 206.9,186.4 210.6,182.1 213.8,181.7 216.8,177.6" fill="none" stroke="#fbfaf7" stroke-width="2.8" stroke-opacity="0.7"/>
<polyline points="147.0,224.9 150.1,222.7 154.3,217.8 156.3,215.3 160.3,214.3 164.7,209.3 166.7,208.4 172.0,205.7 175.5,203.5 180.4,202.5 184.5,201.5 186.5,199.2 190.8,199.0 195.8,195.2 198.7,194.4 202.4,192.1 205.0,188.7 206.9,186.4 210.6,182.1 213.8,181.7 216.8,177.6" fill="none" stroke="#b3ada3" stroke-width="1.2"/>
<polyline points="162.0,245.4 167.2,247.8 169.7,250.5 173.3,252.8 177.5,256.0 182.3,255.7 184.8,259.7 190.4,259.7 194.6,259.4 198.8,258.4 204.8,260.0 209.1,258.1 211.3,256.9 216.4,254.8 220.0,253.0 223.7,251.8 226.4,250.2 230.8,249.7 235.0,246.0 238.1,243.5 242.2,241.1 245.0,240.8 250.0,237.6 254.0,235.0 256.7,232.3 260.0,228.6 263.9,224.9 266.2,220.5" fill="none" stroke="#fbfaf7" stroke-width="2.8" stroke-opacity="0.7"/>
<polyline points="162.0,245.4 167.2,247.8 169.7,250.5 173.3,252.8 177.5,256.0 182.3,255.7 184.8,259.7 190.4,259.7 194.6,259.4 198.8,258.4 204.8,260.0 209.1,258.1 211.3,256.9 216.4,254.8 220.0,253.0 223.7,251.8 226.4,250.2 230.8,249.7 235.0,246.0 238.1,243.5 242.2,241.1 245.0,240.8 250.0,237.6 254.0,235.0 256.7,232.3 260.0,228.6 263.9,224.9 266.2,220.5" fill="none" stroke="#b3ada3" stroke-width="1.2"/>
<polyline points="147.1,299.6 150.7,298.3 152.2,295.4 157.1,295.6 160.1,293.2 163.9,291.6 166.6,288.7 172.4,286.3 174.4,283.8 178.4,283.0 184.1,281.4 187.6,279.9 192.4,280.2 196.8,277.1 201.3,277.6 205.3,273.9 206.6,280.1 206.3,282.4 206.7,287.6 209.3,292.0 210.3,295.1 209.5,300.6 209.0,304.0 207.6,308.1 204.6,312.6 203.1,317.5 202.4,321.4 201.7,325.1 200.0,330.0" fill="none" stroke="#fbfaf7" stroke-width="2.8" stroke-opacity="0.7"/>
<polyline points="147.1,299.6 150.7,298.3 152.2,295.4 157.1,295.6 160.1,293.2 163.9,291.6 166.6,288.7 172.4,286.3 174.4,283.8 178.4,283.0 184.1,281.4 187.6,279.9 192.4,280.2 196.8,277.1 201.3,277.6 205.3,273.9 206.6,280.1 206.3,282.4 206.7,287.6 209.3,292.0 210.3,295.1 209.5,300.6 209.0,304.0 207.6,308.1 204.6,312.6 203.1,317.5 202.4,321.4 201.7,325.1 200.0,330.0" fill="none" stroke="#b3ada3" stroke-width="1.2"/>
<polyline points="439.9,248.7 445.4,248.7 449.8,246.0 453.2,246.3 456.7,243.2 460.5,241.9 466.4,240.4 470.8,239.8 474.3,239.6 478.5,239.1 482.8,237.6 487.3,236.7 491.4,237.4 495.7,235.5 499.9,236.6 503.2,234.1 507.6,235.1 510.7,232.1 515.8,233.1 520.7,231.6 525.3,229.6 528.7,227.5 530.8,225.9 534.9,225.2 540.1,222.7 545.1,221.5 547.1,219.3 552.6,219.5 555.1,215.5 560.7,214.3 565.3,213.5 568.4,211.6 572.8,210.4 575.5,210.0 579.0,208.1 582.9,206.4 587.7,205.4 590.9,203.2 595.8,202.6 601.2,200.3 603.3,197.9 607.4,196.8 611.3,194.7 616.7,194.4 619.5,193.8 623.3,191.2 627.1,190.4 633.0,187.4 636.7,187.3 640.0,185.0" fill="none" stroke="#fbfaf7" stroke-width="2.6" stroke-opacity="0.7"/>
<polyline points="439.9,248.7 445.4,248.7 449.8,246.0 453.2,246.3 456.7,243.2 460.5,241.9 466.4,240.4 470.8,239.8 474.3,239.6 478.5,239.1 482.8,237.6 487.3,236.7 491.4,237.4 495.7,235.5 499.9,236.6 503.2,234.1 507.6,235.1 510.7,232.1 515.8,233.1 520.7,231.6 525.3,229.6 528.7,227.5 530.8,225.9 534.9,225.2 540.1,222.7 545.1,221.5 547.1,219.3 552.6,219.5 555.1,215.5 560.7,214.3 565.3,213.5 568.4,211.6 572.8,210.4 575.5,210.0 579.0,208.1 582.9,206.4 587.7,205.4 590.9,203.2 595.8,202.6 601.2,200.3 603.3,197.9 607.4,196.8 611.3,194.7 616.7,194.4 619.5,193.8 623.3,191.2 627.1,190.4 633.0,187.4 636.7,187.3 640.0,185.0" fill="none" stroke="#c0bab0" stroke-width="1"/>
<polyline points="499.4,319.6 503.3,318.8 505.8,316.0 510.3,313.2 513.5,312.1 515.9,309.9 519.6,307.4 524.3,303.6 527.6,303.5 529.5,298.8 530.9,297.5 532.5,293.6 534.7,289.4 536.5,284.1 539.9,280.2 540.8,278.6 543.7,274.7 546.2,268.8 543.6,266.5 544.1,260.2 542.9,256.4 542.0,251.8 540.2,249.8 540.2,245.3 540.0,240.0" fill="none" stroke="#fbfaf7" stroke-width="2.6" stroke-opacity="0.7"/>
<polyline points="499.4,319.6 503.3,318.8 505.8,316.0 510.3,313.2 513.5,312.1 515.9,309.9 519.6,307.4 524.3,303.6 527.6,303.5 529.5,298.8 530.9,297.5 532.5,293.6 534.7,289.4 536.5,284.1 539.9,280.2 540.8,278.6 543.7,274.7 546.2,268.8 543.6,266.5 544.1,260.2 542.9,256.4 542.0,251.8 540.2,249.8 540.2,245.3 540.0,240.0" fill="none" stroke="#c0bab0" stroke-width="1"/>
<polyline points="599.0,380.0 602.7,378.0 606.4,376.8 610.0,375.2 614.5,371.7 617.8,370.9 622.9,368.7 624.7,368.5 630.1,366.1 632.1,362.8 635.8,360.7 638.8,360.0 643.9,361.1 648.0,360.7 653.0,363.4 656.8,364.1 661.3,366.3 666.0,366.6 668.9,366.5 673.1,369.2 677.2,368.7 681.4,369.1 687.1,369.7 690.0,372.0" fill="none" stroke="#fbfaf7" stroke-width="2.6" stroke-opacity="0.7"/>
<polyline points="599.0,380.0 602.7,378.0 606.4,376.8 610.0,375.2 614.5,371.7 617.8,370.9 622.9,368.7 624.7,368.5 630.1,366.1 632.1,362.8 635.8,360.7 638.8,360.0 643.9,361.1 648.0,360.7 653.0,363.4 656.8,364.1 661.3,366.3 666.0,366.6 668.9,366.5 673.1,369.2 677.2,368.7 681.4,369.1 687.1,369.7 690.0,372.0" fill="none" stroke="#c0bab0" stroke-width="1"/>
<polyline points="146,490 190,493 211,504 234,518 250,527" fill="none" stroke="#a9c3e3" stroke-width="5"/>
<polyline points="146,486 170,484 190,488" fill="none" stroke="#a9c3e3" stroke-width="3"/>
<polyline points="655,154 668,175 690,190 697,192" fill="none" stroke="#a9c3e3" stroke-width="3"/>
<polyline points="672,154 680,170 697,178" fill="none" stroke="#a9c3e3" stroke-width="2"/>
<polyline points="146,157 212,177.6 284.5,239" fill="none" stroke="#a8a5a2" stroke-width="1.5"/>
<polyline points="284,239 352,235.8 395,250.6 427.3,265.6 457.3,273 496.5,268 531,263 540,267.4 579.3,287 618.7,295" fill="none" stroke="#a8a5a2" stroke-width="1.5"/>
<polyline points="146,303 263,293 307,290 351,294 389,300 440,305 500,318 540,330" fill="none" stroke="#a8a5a2" stroke-width="1.5"/>
<polyline points="436.7,173 515.4,187 562.6,213.8 609.8,245.3 625.5,257.8" fill="none" stroke="#a8a5a2" stroke-width="1.5"/>
<polyline points="643.5,154 640,225 632.5,259.5 622.6,279.2 618.7,296.9 612,330 605,400 600,460" fill="none" stroke="#a8a5a2" stroke-width="1.5"/>
<polyline points="618.7,295 634.4,275.2 697,281" fill="none" stroke="#a8a5a2" stroke-width="1.5"/>
<polyline points="146,366 250,366" fill="none" stroke="#a8a5a2" stroke-width="1.5"/>
<polyline points="146,459.6 250,477" fill="none" stroke="#a8a5a2" stroke-width="1.5"/>
<polyline points="604,400 602.7,475.2 608,503.8 626,537.5 630,541" fill="none" stroke="#a8a5a2" stroke-width="1.5"/>
<polyline points="556,480.4 592.3,475.2" fill="none" stroke="#a8a5a2" stroke-width="1.5"/>
<polyline points="641.6,169 666,220 697,235.6" fill="none" stroke="#7e8ea6" stroke-width="2"/>
<polyline points="660,154 672,200 697,220" fill="none" stroke="#8d9cb3" stroke-width="1.6"/>
<polyline points="414,156 431.6,158.3 448.8,164.7 470.2,175.5 491.7,186.2 531,201 560,214.7 585,230 605,251.6 628.5,275.2 646.2,289 666,304.8 677.7,322.5 697,336" fill="none" stroke="#e2ae5e" stroke-width="4.4" stroke-linejoin="round"/>
<polyline points="414,156 431.6,158.3 448.8,164.7 470.2,175.5 491.7,186.2 531,201 560,214.7 585,230 605,251.6 628.5,275.2 646.2,289 666,304.8 677.7,322.5 697,336" fill="none" stroke="#f3c57a" stroke-width="2.8" stroke-linejoin="round"/>
<polyline points="489.5,154 493.8,181.9" fill="none" stroke="#e2ae5e" stroke-width="4.4" stroke-linejoin="round"/>
<polyline points="489.5,154 493.8,181.9" fill="none" stroke="#f3c57a" stroke-width="2.8" stroke-linejoin="round"/>
<polyline points="579,154 598,182.5 605.5,194" fill="none" stroke="#e2ae5e" stroke-width="4.4" stroke-linejoin="round"/>
<polyline points="579,154 598,182.5 605.5,194" fill="none" stroke="#f3c57a" stroke-width="2.8" stroke-linejoin="round"/>
<polyline points="662.5,154 681.4,216.6 688,240" fill="none" stroke="#e2ae5e" stroke-width="4.4" stroke-linejoin="round"/>
<polyline points="662.5,154 681.4,216.6 688,240" fill="none" stroke="#f3c57a" stroke-width="2.8" stroke-linejoin="round"/>
<polyline points="650,232 658,245.7 673.8,269.3 685.6,285 697,295" fill="none" stroke="#e2ae5e" stroke-width="4.4" stroke-linejoin="round"/>
<polyline points="650,232 658,245.7 673.8,269.3 685.6,285 697,295" fill="none" stroke="#f3c57a" stroke-width="2.8" stroke-linejoin="round"/>
<polyline points="146,442 205,453.7 250,471.4" fill="none" stroke="#e2ae5e" stroke-width="4.4" stroke-linejoin="round"/>
<polyline points="146,442 205,453.7 250,471.4" fill="none" stroke="#f3c57a" stroke-width="2.8" stroke-linejoin="round"/>
<polyline points="615.7,454.5 646.8,436.3 685.7,424.6 697,422" fill="none" stroke="#e2ae5e" stroke-width="4.4" stroke-linejoin="round"/>
<polyline points="615.7,454.5 646.8,436.3 685.7,424.6 697,422" fill="none" stroke="#f3c57a" stroke-width="2.8" stroke-linejoin="round"/>
<polyline points="670.2,541 683.1,514.2 690.9,477.8 696,452" fill="none" stroke="#e2ae5e" stroke-width="4.4" stroke-linejoin="round"/>
<polyline points="670.2,541 683.1,514.2 690.9,477.8 696,452" fill="none" stroke="#f3c57a" stroke-width="2.8" stroke-linejoin="round"/>
<polyline points="303.3,154 310,166 317.6,177.3 326.5,185.3 340,191 357,197 374.8,206 380.2,214.8 383.8,198.7 387.3,180.8 395,166 403.4,154" fill="none" stroke="#8fcdbb" stroke-width="4.4" stroke-linejoin="round" stroke-linecap="round"/>
<polyline points="303.3,154 310,166 317.6,177.3 326.5,185.3 340,191 357,197 374.8,206 380.2,214.8 383.8,198.7 387.3,180.8 395,166 403.4,154" fill="none" stroke="#b2e3d5" stroke-width="3.0" stroke-linejoin="round" stroke-linecap="round"/>
<polyline points="547,154 578,173 602,192 613,217 614.8,234 614.8,255.6 603,269.3 593,289 583.3,304.8 569.5,324.4 561.6,340" fill="none" stroke="#8fcdbb" stroke-width="4.4" stroke-linejoin="round" stroke-linecap="round"/>
<polyline points="547,154 578,173 602,192 613,217 614.8,234 614.8,255.6 603,269.3 593,289 583.3,304.8 569.5,324.4 561.6,340" fill="none" stroke="#b2e3d5" stroke-width="3.0" stroke-linejoin="round" stroke-linecap="round"/>
<polyline points="614.8,234 634.4,237.9 658,246 675.7,238 697,225" fill="none" stroke="#8fcdbb" stroke-width="4.4" stroke-linejoin="round" stroke-linecap="round"/>
<polyline points="614.8,234 634.4,237.9 658,246 675.7,238 697,225" fill="none" stroke="#b2e3d5" stroke-width="3.0" stroke-linejoin="round" stroke-linecap="round"/>
<polyline points="614.8,255.6 628.5,269.3 632.5,281 641.2,300 653.7,317.9 664.4,335.8 675.2,340.3 689.5,346.5 697,352" fill="none" stroke="#8fcdbb" stroke-width="4.4" stroke-linejoin="round" stroke-linecap="round"/>
<polyline points="614.8,255.6 628.5,269.3 632.5,281 641.2,300 653.7,317.9 664.4,335.8 675.2,340.3 689.5,346.5 697,352" fill="none" stroke="#b2e3d5" stroke-width="3.0" stroke-linejoin="round" stroke-linecap="round"/>
<polyline points="146,473 175,474.4 205,478.8 250,474.4" fill="none" stroke="#8fcdbb" stroke-width="4.4" stroke-linejoin="round" stroke-linecap="round"/>
<polyline points="146,473 175,474.4 205,478.8 250,474.4" fill="none" stroke="#b2e3d5" stroke-width="3.0" stroke-linejoin="round" stroke-linecap="round"/>
<polyline points="571.6,400 567.7,439 571.6,477.8 575.5,509 582,541" fill="none" stroke="#8fcdbb" stroke-width="4.4" stroke-linejoin="round" stroke-linecap="round"/>
<polyline points="571.6,400 567.7,439 571.6,477.8 575.5,509 582,541" fill="none" stroke="#b2e3d5" stroke-width="3.0" stroke-linejoin="round" stroke-linecap="round"/>
<polyline points="556,492 582,483 608,475.2 646.8,472.7 675.4,467.5 685.7,452 697,439" fill="none" stroke="#8fcdbb" stroke-width="4.4" stroke-linejoin="round" stroke-linecap="round"/>
<polyline points="556,492 582,483 608,475.2 646.8,472.7 675.4,467.5 685.7,452 697,439" fill="none" stroke="#b2e3d5" stroke-width="3.0" stroke-linejoin="round" stroke-linecap="round"/>
<polyline points="556,400 561,407.8 587,415.6 647,418 680.5,413 697,410.4" fill="none" stroke="#8fcdbb" stroke-width="4.4" stroke-linejoin="round" stroke-linecap="round"/>
<polyline points="556,400 561,407.8 587,415.6 647,418 680.5,413 697,410.4" fill="none" stroke="#b2e3d5" stroke-width="3.0" stroke-linejoin="round" stroke-linecap="round"/>
<polyline points="641.6,511.6 672.8,501.2 688.3,485.6 697,483" fill="none" stroke="#8fcdbb" stroke-width="4.4" stroke-linejoin="round" stroke-linecap="round"/>
<polyline points="641.6,511.6 672.8,501.2 688.3,485.6 697,483" fill="none" stroke="#b2e3d5" stroke-width="3.0" stroke-linejoin="round" stroke-linecap="round"/>
<path d="M472 177Q480 175 488 177V185Q487 190 480 192Q473 190 472 185Z" fill="#4b6b93" stroke="#fff" stroke-width="1.1"/>
<text x="480" y="186.6" font-size="7.5" font-weight="bold" fill="#fff" text-anchor="middle" font-family="Liberation Sans">254</text>
<path d="M597.5 186.5Q605.5 184.5 613.5 186.5V194.5Q612.5 199.5 605.5 201.5Q598.5 199.5 597.5 194.5Z" fill="#4b6b93" stroke="#fff" stroke-width="1.1"/>
<text x="605.5" y="196.1" font-size="7.5" font-weight="bold" fill="#fff" text-anchor="middle" font-family="Liberation Sans">17</text>
<path d="M639.8 280Q647.8 278 655.8 280V288Q654.8 293 647.8 295Q640.8 293 639.8 288Z" fill="#4b6b93" stroke="#fff" stroke-width="1.1"/>
<text x="647.8" y="289.6" font-size="7.5" font-weight="bold" fill="#fff" text-anchor="middle" font-family="Liberation Sans">254</text>
<path d="M665.8 262.3Q673.8 260.3 681.8 262.3V270.3Q680.8 275.3 673.8 277.3Q666.8 275.3 665.8 270.3Z" fill="#4b6b93" stroke="#fff" stroke-width="1.1"/>
<text x="673.8" y="271.90000000000003" font-size="7.5" font-weight="bold" fill="#fff" text-anchor="middle" font-family="Liberation Sans">17</text>
<path d="M682 421Q690 419 698 421V429Q697 434 690 436Q683 434 682 429Z" fill="#4b6b93" stroke="#fff" stroke-width="1.1"/>
<text x="690" y="430.6" font-size="7.5" font-weight="bold" fill="#fff" text-anchor="middle" font-family="Liberation Sans">246</text>
<circle cx="673.4" cy="325" r="4.5" fill="#fff"/><text x="673.4" y="327.8" font-size="7" fill="#6a7a90" text-anchor="middle">★</text>
</svg>
<svg class="a" style="left:146px;top:154px" width="551" height="387" viewBox="146 154 551 387" font-family="Liberation Sans">
<g fill="none" stroke="#6a6a6a" stroke-opacity="0.8" stroke-width="5.4" stroke-linecap="butt"><path d="M623.7 353V365M556 365.2H664M592.3 379.3H655.2V398.6H592.3ZM619.8 398.6V431H606M582 425L590 418M637.5 406.9L664 424.6"/><path stroke-opacity="0.25" d="M470 365H556M533 343V432M506 375H561V405H506ZM506 390H561M506 412L470 432M561 412L578 426.5"/><path d="M556 365H600M561 375V405M561 412L578 426.5"/></g>
<text x="199.7" y="217.9" font-size="13" fill="#555" stroke="#fff" stroke-width="2" stroke-opacity="0.85" paint-order="stroke" textLength="63.3" lengthAdjust="spacingAndGlyphs">東久留米市</text>
<text x="223.9" y="305.9" font-size="13" fill="#555" stroke="#fff" stroke-width="2" stroke-opacity="0.85" paint-order="stroke" textLength="50.0" lengthAdjust="spacingAndGlyphs">西東京市</text>
<text x="251.0" y="326.4" font-size="13" fill="#555" stroke="#fff" stroke-width="2" stroke-opacity="0.85" paint-order="stroke" textLength="50.3" lengthAdjust="spacingAndGlyphs">武蔵野市</text>
<text x="149.5" y="372.9" font-size="13" fill="#555" stroke="#fff" stroke-width="2" stroke-opacity="0.85" paint-order="stroke" textLength="48.8" lengthAdjust="spacingAndGlyphs">小金井市</text>
<text x="446.0" y="278.4" font-size="13" fill="#555" stroke="#fff" stroke-width="2" stroke-opacity="0.85" paint-order="stroke" textLength="38.0" lengthAdjust="spacingAndGlyphs">練馬区</text>
<text x="600.4" y="236.6" font-size="13" fill="#555" stroke="#fff" stroke-width="2" stroke-opacity="0.85" paint-order="stroke" textLength="33.0" lengthAdjust="spacingAndGlyphs">板橋区</text>
<text x="614.5" y="316.9" font-size="13" fill="#555" stroke="#fff" stroke-width="2" stroke-opacity="0.85" paint-order="stroke" textLength="35.5" lengthAdjust="spacingAndGlyphs">豊島区</text>
<text x="601.4" y="468.5" font-size="13" fill="#555" stroke="#fff" stroke-width="2" stroke-opacity="0.85" paint-order="stroke" textLength="37.6" lengthAdjust="spacingAndGlyphs">渋谷区</text>
<text x="159.0" y="536.5" font-size="13" fill="#555" stroke="#fff" stroke-width="2" stroke-opacity="0.85" paint-order="stroke" textLength="34.0" lengthAdjust="spacingAndGlyphs">稲城市</text>
<text x="672.5" y="216.9" font-size="13" fill="#555" stroke="#fff" stroke-width="2" stroke-opacity="0.85" paint-order="stroke" textLength="12.5" lengthAdjust="spacingAndGlyphs">区</text>
<text x="585.3" y="372.9" font-size="13" fill="#555" stroke="#fff" stroke-width="2" stroke-opacity="0.85" paint-order="stroke" textLength="11.2" lengthAdjust="spacingAndGlyphs">新</text>
<text x="444.0" y="372.6" font-size="13" fill="#555" stroke="#fff" stroke-width="2" stroke-opacity="0.85" paint-order="stroke" textLength="32.5" lengthAdjust="spacingAndGlyphs">杉並区</text>
<text x="236.0" y="501.9" font-size="13" fill="#555" stroke="#fff" stroke-width="2" stroke-opacity="0.85" paint-order="stroke" textLength="44.0" lengthAdjust="spacingAndGlyphs">調布市</text>
<text x="146.0" y="171.4" font-size="9" fill="#536984" font-weight="bold" stroke="#fff" stroke-width="2" stroke-opacity="0.85" paint-order="stroke" textLength="19.0" lengthAdjust="spacingAndGlyphs">新秋津</text>
<rect x="148.4" y="154.4" width="7.2" height="7.2" rx="1.2" fill="#5fa9e1" stroke="#fff" stroke-width="0.9"/><rect x="150.4" y="156" width="3.2" height="3.4" rx="0.8" fill="#fff"/>
<text x="203.0" y="188.9" font-size="9" fill="#536984" font-weight="bold" stroke="#fff" stroke-width="2" stroke-opacity="0.85" paint-order="stroke" textLength="15.0" lengthAdjust="spacingAndGlyphs">清瀬</text>
<rect x="206.9" y="173.4" width="7.2" height="7.2" rx="1.2" fill="#5fa9e1" stroke="#fff" stroke-width="0.9"/><rect x="208.9" y="175" width="3.2" height="3.4" rx="0.8" fill="#fff"/>
<text x="243.5" y="242.4" font-size="9" fill="#536984" font-weight="bold" stroke="#fff" stroke-width="2" stroke-opacity="0.85" paint-order="stroke" textLength="42.5" lengthAdjust="spacingAndGlyphs">ひばりヶ丘</text>
<rect x="260.4" y="225.9" width="7.2" height="7.2" rx="1.2" fill="#5fa9e1" stroke="#fff" stroke-width="0.9"/><rect x="262.4" y="227.5" width="3.2" height="3.4" rx="0.8" fill="#fff"/>
<text x="336.4" y="230.4" font-size="9" fill="#536984" font-weight="bold" stroke="#fff" stroke-width="2" stroke-opacity="0.85" paint-order="stroke" textLength="33.6" lengthAdjust="spacingAndGlyphs">大泉学園</text>
<rect x="348.9" y="232.70000000000002" width="7.2" height="7.2" rx="1.2" fill="#5fa9e1" stroke="#fff" stroke-width="0.9"/><rect x="350.9" y="234.3" width="3.2" height="3.4" rx="0.8" fill="#fff"/>
<text x="375.0" y="262.8" font-size="9" fill="#536984" font-weight="bold" stroke="#fff" stroke-width="2" stroke-opacity="0.85" paint-order="stroke" textLength="40.0" lengthAdjust="spacingAndGlyphs">石神井公園</text>
<rect x="391.0" y="245.4" width="7.2" height="7.2" rx="1.2" fill="#5fa9e1" stroke="#fff" stroke-width="0.9"/><rect x="393.0" y="247" width="3.2" height="3.4" rx="0.8" fill="#fff"/>
<text x="377.3" y="312.4" font-size="9" fill="#536984" font-weight="bold" stroke="#fff" stroke-width="2" stroke-opacity="0.85" paint-order="stroke" textLength="23.7" lengthAdjust="spacingAndGlyphs">上井草</text>
<rect x="385.4" y="296.4" width="7.2" height="7.2" rx="1.2" fill="#5fa9e1" stroke="#fff" stroke-width="0.9"/><rect x="387.4" y="298" width="3.2" height="3.4" rx="0.8" fill="#fff"/>
<text x="444.6" y="174.7" font-size="9" fill="#536984" font-weight="bold" stroke="#fff" stroke-width="2" stroke-opacity="0.85" paint-order="stroke" textLength="15.7" lengthAdjust="spacingAndGlyphs">成増</text>
<rect x="448.9" y="156.70000000000002" width="7.2" height="7.2" rx="1.2" fill="#5fa9e1" stroke="#fff" stroke-width="0.9"/><rect x="450.9" y="158.3" width="3.2" height="3.4" rx="0.8" fill="#fff"/>
<text x="498.0" y="198.4" font-size="9" fill="#536984" font-weight="bold" stroke="#fff" stroke-width="2" stroke-opacity="0.85" paint-order="stroke" textLength="33.0" lengthAdjust="spacingAndGlyphs">東武練馬</text>
<rect x="511.19999999999993" y="181.20000000000002" width="7.2" height="7.2" rx="1.2" fill="#5fa9e1" stroke="#fff" stroke-width="0.9"/><rect x="513.1999999999999" y="182.8" width="3.2" height="3.4" rx="0.8" fill="#fff"/>
<text x="559.5" y="206.2" font-size="9" fill="#536984" font-weight="bold" stroke="#fff" stroke-width="2" stroke-opacity="0.85" paint-order="stroke" textLength="31.5" lengthAdjust="spacingAndGlyphs">ときわ台</text>
<rect x="571.6" y="207.70000000000002" width="7.2" height="7.2" rx="1.2" fill="#5fa9e1" stroke="#fff" stroke-width="0.9"/><rect x="573.6" y="209.3" width="3.2" height="3.4" rx="0.8" fill="#fff"/>
<text x="634.0" y="172.6" font-size="9" fill="#536984" font-weight="bold" stroke="#fff" stroke-width="2" stroke-opacity="0.85" paint-order="stroke" textLength="13.3" lengthAdjust="spacingAndGlyphs">赤羽</text>
<rect x="638.0" y="156.1" width="7.2" height="7.2" rx="1.2" fill="#5fa9e1" stroke="#fff" stroke-width="0.9"/><rect x="640.0" y="157.7" width="3.2" height="3.4" rx="0.8" fill="#fff"/>
<text x="624.5" y="210.5" font-size="9" fill="#536984" font-weight="bold" stroke="#fff" stroke-width="2" stroke-opacity="0.85" paint-order="stroke" textLength="15.2" lengthAdjust="spacingAndGlyphs">十条</text>
<rect x="639.9" y="203.4" width="7.2" height="7.2" rx="1.2" fill="#5fa9e1" stroke="#fff" stroke-width="0.9"/><rect x="641.9" y="205" width="3.2" height="3.4" rx="0.8" fill="#fff"/>
<text x="671.0" y="240.9" font-size="9" fill="#536984" font-weight="bold" stroke="#fff" stroke-width="2" stroke-opacity="0.85" paint-order="stroke" textLength="14.2" lengthAdjust="spacingAndGlyphs">王子</text>
<rect x="675.0" y="223.4" width="7.2" height="7.2" rx="1.2" fill="#5fa9e1" stroke="#fff" stroke-width="0.9"/><rect x="677.0" y="225" width="3.2" height="3.4" rx="0.8" fill="#fff"/>
<text x="455.6" y="256.4" font-size="9" fill="#536984" font-weight="bold" stroke="#fff" stroke-width="2" stroke-opacity="0.85" paint-order="stroke" textLength="26.8" lengthAdjust="spacingAndGlyphs">豊島園</text>
<rect x="481.9" y="249.4" width="7.2" height="7.2" rx="1.2" fill="#5fa9e1" stroke="#fff" stroke-width="0.9"/><rect x="483.9" y="251" width="3.2" height="3.4" rx="0.8" fill="#fff"/>
<text x="488.7" y="280.1" font-size="9" fill="#536984" font-weight="bold" stroke="#fff" stroke-width="2" stroke-opacity="0.85" paint-order="stroke" textLength="17.3" lengthAdjust="spacingAndGlyphs">練馬</text>
<rect x="492.9" y="262.09999999999997" width="7.2" height="7.2" rx="1.2" fill="#5fa9e1" stroke="#fff" stroke-width="0.9"/><rect x="494.9" y="263.7" width="3.2" height="3.4" rx="0.8" fill="#fff"/>
<text x="535.8" y="264.4" font-size="9" fill="#536984" font-weight="bold" stroke="#fff" stroke-width="2" stroke-opacity="0.85" paint-order="stroke" textLength="31.5" lengthAdjust="spacingAndGlyphs">小竹向原</text>
<rect x="548.0" y="244.8" width="7.2" height="7.2" rx="1.2" fill="#5fa9e1" stroke="#fff" stroke-width="0.9"/><rect x="550.0" y="246.4" width="3.2" height="3.4" rx="0.8" fill="#fff"/>
<text x="620.8" y="269.1" font-size="9" fill="#536984" font-weight="bold" stroke="#fff" stroke-width="2" stroke-opacity="0.85" paint-order="stroke" textLength="20.5" lengthAdjust="spacingAndGlyphs">北池袋</text>
<rect x="628.9" y="252.70000000000002" width="7.2" height="7.2" rx="1.2" fill="#5fa9e1" stroke="#fff" stroke-width="0.9"/><rect x="630.9" y="254.3" width="3.2" height="3.4" rx="0.8" fill="#fff"/>
<text x="422.6" y="295.8" font-size="9" fill="#536984" font-weight="bold" stroke="#fff" stroke-width="2" stroke-opacity="0.85" paint-order="stroke" textLength="25.1" lengthAdjust="spacingAndGlyphs">下井草</text>
<rect x="430.0" y="298.29999999999995" width="7.2" height="7.2" rx="1.2" fill="#5fa9e1" stroke="#fff" stroke-width="0.9"/><rect x="432.0" y="299.9" width="3.2" height="3.4" rx="0.8" fill="#fff"/>
<text x="452.5" y="319.4" font-size="9" fill="#536984" font-weight="bold" stroke="#fff" stroke-width="2" stroke-opacity="0.85" paint-order="stroke" textLength="26.7" lengthAdjust="spacingAndGlyphs">鷺ノ宮</text>
<rect x="463.0" y="303.0" width="7.2" height="7.2" rx="1.2" fill="#5fa9e1" stroke="#fff" stroke-width="0.9"/><rect x="465.0" y="304.6" width="3.2" height="3.4" rx="0.8" fill="#fff"/>
<text x="531.0" y="289.6" font-size="9" fill="#536984" font-weight="bold" stroke="#fff" stroke-width="2" stroke-opacity="0.85" paint-order="stroke" textLength="25.3" lengthAdjust="spacingAndGlyphs">東長崎</text>
<rect x="557.4" y="282.59999999999997" width="7.2" height="7.2" rx="1.2" fill="#5fa9e1" stroke="#fff" stroke-width="0.9"/><rect x="559.4" y="284.2" width="3.2" height="3.4" rx="0.8" fill="#fff"/>
<text x="513.8" y="310.0" font-size="9" fill="#536984" font-weight="bold" stroke="#fff" stroke-width="2" stroke-opacity="0.85" paint-order="stroke" textLength="15.8" lengthAdjust="spacingAndGlyphs">沼袋</text>
<rect x="518.1" y="310.9" width="7.2" height="7.2" rx="1.2" fill="#5fa9e1" stroke="#fff" stroke-width="0.9"/><rect x="520.1" y="312.5" width="3.2" height="3.4" rx="0.8" fill="#fff"/>
<text x="574.9" y="308.6" font-size="9" fill="#536984" font-weight="bold" stroke="#fff" stroke-width="2" stroke-opacity="0.85" paint-order="stroke" textLength="24.1" lengthAdjust="spacingAndGlyphs">椎名町</text>
<rect x="582.4" y="292.4" width="7.2" height="7.2" rx="1.2" fill="#5fa9e1" stroke="#fff" stroke-width="0.9"/><rect x="584.4" y="294" width="3.2" height="3.4" rx="0.8" fill="#fff"/>
<text x="609.8" y="303.7" font-size="9" fill="#536984" font-weight="bold" stroke="#fff" stroke-width="2" stroke-opacity="0.85" paint-order="stroke" textLength="18.9" lengthAdjust="spacingAndGlyphs">池袋</text>
<rect x="614.1" y="286.4" width="7.2" height="7.2" rx="1.2" fill="#5fa9e1" stroke="#fff" stroke-width="0.9"/><rect x="616.1" y="288" width="3.2" height="3.4" rx="0.8" fill="#fff"/>
<text x="560.4" y="328.5" font-size="9" fill="#536984" font-weight="bold" stroke="#fff" stroke-width="2" stroke-opacity="0.85" paint-order="stroke" textLength="19.6" lengthAdjust="spacingAndGlyphs">下落合</text>
<text x="589.0" y="401.9" font-size="9" fill="#536984" font-weight="bold" stroke="#fff" stroke-width="2" stroke-opacity="0.85" paint-order="stroke" textLength="15.7" lengthAdjust="spacingAndGlyphs">新宿</text>
<rect x="594.4" y="386.0" width="7.2" height="7.2" rx="1.2" fill="#5fa9e1" stroke="#fff" stroke-width="0.9"/><rect x="596.4" y="387.6" width="3.2" height="3.4" rx="0.8" fill="#fff"/>
<text x="662.8" y="403.4" font-size="9" fill="#536984" font-weight="bold" stroke="#fff" stroke-width="2" stroke-opacity="0.85" paint-order="stroke" textLength="22.3" lengthAdjust="spacingAndGlyphs">市ケ谷</text>
<rect x="669.1" y="386.7" width="7.2" height="7.2" rx="1.2" fill="#5fa9e1" stroke="#fff" stroke-width="0.9"/><rect x="671.1" y="388.3" width="3.2" height="3.4" rx="0.8" fill="#fff"/>
<text x="680.6" y="374.4" font-size="9" fill="#536984" font-weight="bold" stroke="#fff" stroke-width="2" stroke-opacity="0.85" paint-order="stroke" textLength="16.4" lengthAdjust="spacingAndGlyphs">飯田橋</text>
<rect x="686.4" y="356.4" width="7.2" height="7.2" rx="1.2" fill="#5fa9e1" stroke="#fff" stroke-width="0.9"/><rect x="688.4" y="358" width="3.2" height="3.4" rx="0.8" fill="#fff"/>
<text x="589.7" y="424.2" font-size="9" fill="#536984" font-weight="bold" stroke="#fff" stroke-width="2" stroke-opacity="0.85" paint-order="stroke" textLength="24.7" lengthAdjust="spacingAndGlyphs">代々木</text>
<rect x="596.4" y="407.4" width="7.2" height="7.2" rx="1.2" fill="#5fa9e1" stroke="#fff" stroke-width="0.9"/><rect x="598.4" y="409" width="3.2" height="3.4" rx="0.8" fill="#fff"/>
<text x="558.6" y="460.4" font-size="9" fill="#536984" font-weight="bold" stroke="#fff" stroke-width="2" stroke-opacity="0.85" paint-order="stroke" textLength="14.3" lengthAdjust="spacingAndGlyphs">上原</text>
<text x="592.3" y="489.0" font-size="9" fill="#536984" font-weight="bold" stroke="#fff" stroke-width="2" stroke-opacity="0.85" paint-order="stroke" textLength="15.6" lengthAdjust="spacingAndGlyphs">渋谷</text>
<rect x="595.1999999999999" y="471.59999999999997" width="7.2" height="7.2" rx="1.2" fill="#5fa9e1" stroke="#fff" stroke-width="0.9"/><rect x="597.1999999999999" y="473.2" width="3.2" height="3.4" rx="0.8" fill="#fff"/>
<text x="626.0" y="510.4" font-size="9" fill="#536984" font-weight="bold" stroke="#fff" stroke-width="2" stroke-opacity="0.85" paint-order="stroke" textLength="24.7" lengthAdjust="spacingAndGlyphs">恵比寿</text>
<rect x="614.6999999999999" y="503.4" width="7.2" height="7.2" rx="1.2" fill="#5fa9e1" stroke="#fff" stroke-width="0.9"/><rect x="616.6999999999999" y="505" width="3.2" height="3.4" rx="0.8" fill="#fff"/>
<text x="563.8" y="516.8" font-size="9" fill="#536984" font-weight="bold" stroke="#fff" stroke-width="2" stroke-opacity="0.85" paint-order="stroke" textLength="24.6" lengthAdjust="spacingAndGlyphs">中目黒</text>
<rect x="593.9" y="509.79999999999995" width="7.2" height="7.2" rx="1.2" fill="#5fa9e1" stroke="#fff" stroke-width="0.9"/><rect x="595.9" y="511.4" width="3.2" height="3.4" rx="0.8" fill="#fff"/>
<text x="670.2" y="523.3" font-size="9" fill="#536984" font-weight="bold" stroke="#fff" stroke-width="2" stroke-opacity="0.85" paint-order="stroke" textLength="23.3" lengthAdjust="spacingAndGlyphs">泉岳寺</text>
<rect x="678.4" y="524.8" width="7.2" height="7.2" rx="1.2" fill="#5fa9e1" stroke="#fff" stroke-width="0.9"/><rect x="680.4" y="526.4" width="3.2" height="3.4" rx="0.8" fill="#fff"/>
<text x="196.0" y="421.7" font-size="9" fill="#536984" font-weight="bold" stroke="#fff" stroke-width="2" stroke-opacity="0.85" paint-order="stroke" textLength="15.0" lengthAdjust="spacingAndGlyphs">多摩</text>
<rect x="199.9" y="423.4" width="7.2" height="7.2" rx="1.2" fill="#5fa9e1" stroke="#fff" stroke-width="0.9"/><rect x="201.9" y="425" width="3.2" height="3.4" rx="0.8" fill="#fff"/>
<text x="162.2" y="451.2" font-size="9" fill="#536984" font-weight="bold" stroke="#fff" stroke-width="2" stroke-opacity="0.85" paint-order="stroke" textLength="25.1" lengthAdjust="spacingAndGlyphs">東府中</text>
<rect x="154.0" y="444.2" width="7.2" height="7.2" rx="1.2" fill="#5fa9e1" stroke="#fff" stroke-width="0.9"/><rect x="156.0" y="445.8" width="3.2" height="3.4" rx="0.8" fill="#fff"/>
<text x="210.9" y="451.8" font-size="9" fill="#536984" font-weight="bold" stroke="#fff" stroke-width="2" stroke-opacity="0.85" paint-order="stroke" textLength="41.1" lengthAdjust="spacingAndGlyphs">調布飛行場</text>
<rect x="227.4" y="435.0" width="7.2" height="7.2" rx="1.2" fill="#5fa9e1" stroke="#fff" stroke-width="0.9"/><rect x="229.4" y="436.6" width="3.2" height="3.4" rx="0.8" fill="#fff"/>
<text x="222.7" y="474.8" font-size="9" fill="#536984" font-weight="bold" stroke="#fff" stroke-width="2" stroke-opacity="0.85" paint-order="stroke" textLength="25.1" lengthAdjust="spacingAndGlyphs">飛田給</text>
<rect x="213.4" y="467.79999999999995" width="7.2" height="7.2" rx="1.2" fill="#5fa9e1" stroke="#fff" stroke-width="0.9"/><rect x="215.4" y="469.4" width="3.2" height="3.4" rx="0.8" fill="#fff"/>
<text x="171.0" y="493.1" font-size="9" fill="#536984" font-weight="bold" stroke="#fff" stroke-width="2" stroke-opacity="0.85" paint-order="stroke" textLength="32.5" lengthAdjust="spacingAndGlyphs">競艇場前</text>
<rect x="163.0" y="478.2" width="7.2" height="7.2" rx="1.2" fill="#5fa9e1" stroke="#fff" stroke-width="0.9"/><rect x="165.0" y="479.8" width="3.2" height="3.4" rx="0.8" fill="#fff"/>
<text x="198.5" y="514.7" font-size="9" fill="#536984" font-weight="bold" stroke="#fff" stroke-width="2" stroke-opacity="0.85" paint-order="stroke" textLength="25.7" lengthAdjust="spacingAndGlyphs">矢野口</text>
<rect x="208.8" y="516.4" width="7.2" height="7.2" rx="1.2" fill="#5fa9e1" stroke="#fff" stroke-width="0.9"/><rect x="210.8" y="518" width="3.2" height="3.4" rx="0.8" fill="#fff"/>
<text x="146.0" y="512.6" font-size="9" fill="#536984" font-weight="bold" stroke="#fff" stroke-width="2" stroke-opacity="0.85" paint-order="stroke" textLength="14.0" lengthAdjust="spacingAndGlyphs">多摩</text>
<rect x="156.4" y="181.4" width="7.2" height="7.2" rx="1.2" fill="#fff" stroke="#9aa" stroke-width="0.8"/>
<rect x="172.4" y="280.4" width="7.2" height="7.2" rx="1.2" fill="#fff" stroke="#9aa" stroke-width="0.8"/>
<text x="0" y="0" font-size="9" font-weight="bold" fill="#4a5a5a" stroke="#fff" stroke-width="2" stroke-opacity="0.8" paint-order="stroke" textLength="58" lengthAdjust="spacingAndGlyphs" transform="translate(322.5,185.5) rotate(23)">関越自動車道</text>
<rect x="386.2" y="216.3" width="16.6" height="10.5" fill="#7b886a" stroke="#c5ccb8" stroke-width="1.2"/>
<text x="387.8" y="224.6" font-size="7.5" font-weight="bold" fill="#fff" textLength="13.4" lengthAdjust="spacingAndGlyphs">練馬</text>
<text x="146.0" y="199.9" font-size="9" fill="#6a7480" stroke="#fff" stroke-width="2" stroke-opacity="0.85" paint-order="stroke" textLength="29.0" lengthAdjust="spacingAndGlyphs">三恵病院</text>
<text x="237.0" y="164.4" font-size="9" fill="#6a7480" stroke="#fff" stroke-width="2" stroke-opacity="0.85" paint-order="stroke" textLength="35.0" lengthAdjust="spacingAndGlyphs">史跡公園</text>
<text x="235.7" y="260.6" font-size="9" fill="#6a7480" stroke="#fff" stroke-width="2" stroke-opacity="0.85" paint-order="stroke" textLength="55.0" lengthAdjust="spacingAndGlyphs">市役所保谷庁舎</text>
<text x="160.0" y="297.4" font-size="9" fill="#6a7480" stroke="#fff" stroke-width="2" stroke-opacity="0.85" paint-order="stroke" textLength="31.6" lengthAdjust="spacingAndGlyphs">昭和病院</text>
<text x="148.3" y="335.7" font-size="9" fill="#6a7480" stroke="#fff" stroke-width="2" stroke-opacity="0.85" paint-order="stroke" textLength="39.6" lengthAdjust="spacingAndGlyphs">文化学園大</text>
<text x="510.7" y="165.3" font-size="9" fill="#6a7480" stroke="#fff" stroke-width="2" stroke-opacity="0.85" paint-order="stroke" textLength="39.3" lengthAdjust="spacingAndGlyphs">大東文化大</text>
<text x="677.5" y="321.0" font-size="9" fill="#6a7480" stroke="#fff" stroke-width="2" stroke-opacity="0.85" paint-order="stroke" textLength="19.5" lengthAdjust="spacingAndGlyphs">拓殖大</text>
<text x="205.0" y="405.4" font-size="9" fill="#6a7480" stroke="#fff" stroke-width="2" stroke-opacity="0.85" paint-order="stroke" textLength="32.4" lengthAdjust="spacingAndGlyphs">野川公園</text>
<text x="147.5" y="421.2" font-size="9" fill="#6a7480" stroke="#fff" stroke-width="2" stroke-opacity="0.85" paint-order="stroke" textLength="23.5" lengthAdjust="spacingAndGlyphs">山公園</text>
<circle cx="199" cy="329.3" r="6.3" fill="#6fb55f" fill-opacity="0.72" stroke="#3f8a33" stroke-width="1"/>
<circle cx="171.6" cy="336.7" r="6.3" fill="#f0a468" fill-opacity="0.72" stroke="#c07a40" stroke-width="1"/>
<circle cx="193.4" cy="339" r="6.3" fill="#44508a" fill-opacity="0.72" stroke="#22306a" stroke-width="1"/>
<circle cx="162.7" cy="345.6" r="6.3" fill="#44508a" fill-opacity="0.72" stroke="#22306a" stroke-width="1"/>
<circle cx="161.8" cy="352.6" r="6.3" fill="#e19090" fill-opacity="0.72" stroke="#b45f5f" stroke-width="1"/>
<circle cx="178.6" cy="346.7" r="6.3" fill="#6fb55f" fill-opacity="0.72" stroke="#3f8a33" stroke-width="1"/>
<circle cx="176.2" cy="355" r="6.3" fill="#e19090" fill-opacity="0.72" stroke="#b45f5f" stroke-width="1"/>
<circle cx="200" cy="358" r="6.3" fill="#f0a468" fill-opacity="0.72" stroke="#c07a40" stroke-width="1"/>
<path d="M213.9 350.4A6.3 6.3 0 0 0 213.9 363.0Z" fill="#e19090" fill-opacity="0.8"/>
<path d="M213.9 350.4A6.3 6.3 0 0 1 213.9 363.0Z" fill="#6fb55f" fill-opacity="0.85"/>
<circle cx="213.9" cy="356.7" r="6.3" fill="none" stroke="#3f8a33" stroke-width="1"/>
<circle cx="233.9" cy="345" r="6.3" fill="#6fb55f" fill-opacity="0.72" stroke="#3f8a33" stroke-width="1"/>
<circle cx="236.2" cy="365.8" r="6.3" fill="#6fb55f" fill-opacity="0.72" stroke="#3f8a33" stroke-width="1"/>
<path d="M232.5 366.0A6.3 6.3 0 0 0 232.5 378.6Z" fill="#e19090" fill-opacity="0.8"/>
<path d="M232.5 366.0A6.3 6.3 0 0 1 232.5 378.6Z" fill="#6fb55f" fill-opacity="0.85"/>
<circle cx="232.5" cy="372.3" r="6.3" fill="none" stroke="#3f8a33" stroke-width="1"/>
<circle cx="233.2" cy="381.6" r="6.3" fill="#e19090" fill-opacity="0.72" stroke="#b45f5f" stroke-width="1"/>
<circle cx="203" cy="374" r="6.3" fill="#44508a" fill-opacity="0.72" stroke="#22306a" stroke-width="1"/>
<circle cx="193.2" cy="378.8" r="6.3" fill="#6fb55f" fill-opacity="0.72" stroke="#3f8a33" stroke-width="1"/>
<circle cx="161.8" cy="386.7" r="6.3" fill="#6fb55f" fill-opacity="0.72" stroke="#3f8a33" stroke-width="1"/>
<path d="M162.6 392.59999999999997A6.3 6.3 0 0 0 162.6 405.2Z" fill="#e19090" fill-opacity="0.8"/>
<path d="M162.6 392.59999999999997A6.3 6.3 0 0 1 162.6 405.2Z" fill="#44508a" fill-opacity="0.85"/>
<circle cx="162.6" cy="398.9" r="6.3" fill="none" stroke="#22306a" stroke-width="1"/>
<circle cx="175.6" cy="403.3" r="6.3" fill="#909cbd" fill-opacity="0.72" stroke="#5e6a92" stroke-width="1"/>
<circle cx="553.4" cy="292.7" r="6.3" fill="#e19090" fill-opacity="0.72" stroke="#b45f5f" stroke-width="1"/>
<circle cx="555.6" cy="314.2" r="6.3" fill="#6fb55f" fill-opacity="0.72" stroke="#3f8a33" stroke-width="1"/>
<circle cx="551.3" cy="317" r="6.3" fill="#e19090" fill-opacity="0.72" stroke="#b45f5f" stroke-width="1"/>
<circle cx="580.8" cy="314.4" r="6.3" fill="#a68bd6" fill-opacity="0.72" stroke="#7a5fb0" stroke-width="1"/>
<circle cx="590" cy="314" r="6.3" fill="#909cbd" fill-opacity="0.72" stroke="#5e6a92" stroke-width="1"/>
<path d="M585.1 309.7A6.3 6.3 0 0 0 585.1 322.3Z" fill="#e19090" fill-opacity="0.8"/>
<path d="M585.1 309.7A6.3 6.3 0 0 1 585.1 322.3Z" fill="#44508a" fill-opacity="0.85"/>
<circle cx="585.1" cy="316" r="6.3" fill="none" stroke="#22306a" stroke-width="1"/>
<circle cx="584.6" cy="325.6" r="6.3" fill="#44508a" fill-opacity="0.72" stroke="#22306a" stroke-width="1"/>
<circle cx="573.8" cy="331.6" r="6.3" fill="#6fb55f" fill-opacity="0.72" stroke="#3f8a33" stroke-width="1"/>
<circle cx="597" cy="324" r="6.3" fill="#6fb55f" fill-opacity="0.72" stroke="#3f8a33" stroke-width="1"/>
<circle cx="602.3" cy="313.8" r="6.3" fill="#6fb55f" fill-opacity="0.72" stroke="#3f8a33" stroke-width="1"/>
<circle cx="604.5" cy="315.4" r="6.3" fill="#6fb55f" fill-opacity="0.72" stroke="#3f8a33" stroke-width="1"/>
<circle cx="613" cy="329" r="6.3" fill="#f0a468" fill-opacity="0.72" stroke="#c07a40" stroke-width="1"/>
<circle cx="619.6" cy="336" r="6.3" fill="#909cbd" fill-opacity="0.72" stroke="#5e6a92" stroke-width="1"/>
<path d="M581.6 337.8A6.3 6.3 0 0 0 581.6 350.40000000000003Z" fill="#e19090" fill-opacity="0.8"/>
<path d="M581.6 337.8A6.3 6.3 0 0 1 581.6 350.40000000000003Z" fill="#6fb55f" fill-opacity="0.85"/>
<circle cx="581.6" cy="344.1" r="6.3" fill="none" stroke="#3f8a33" stroke-width="1"/>
<circle cx="593.5" cy="344.9" r="6.3" fill="#44508a" fill-opacity="0.72" stroke="#22306a" stroke-width="1"/>
<circle cx="606.2" cy="341.9" r="6.3" fill="#6fb55f" fill-opacity="0.72" stroke="#3f8a33" stroke-width="1"/>
<circle cx="609.2" cy="341.9" r="6.3" fill="#f0a468" fill-opacity="0.72" stroke="#c07a40" stroke-width="1"/>
<circle cx="647.9" cy="346.4" r="6.3" fill="#e19090" fill-opacity="0.72" stroke="#b45f5f" stroke-width="1"/>
<circle cx="677.7" cy="344.9" r="6.3" fill="#6fb55f" fill-opacity="0.72" stroke="#3f8a33" stroke-width="1"/>
<circle cx="680" cy="348.6" r="6.3" fill="#b9a85a" fill-opacity="0.72" stroke="#7e7030" stroke-width="1"/>
<path d="M670.2 351.3A6.3 6.3 0 0 0 670.2 363.90000000000003Z" fill="#e19090" fill-opacity="0.8"/>
<path d="M670.2 351.3A6.3 6.3 0 0 1 670.2 363.90000000000003Z" fill="#44508a" fill-opacity="0.85"/>
<circle cx="670.2" cy="357.6" r="6.3" fill="none" stroke="#22306a" stroke-width="1"/>
<circle cx="574.9" cy="353.8" r="6.3" fill="#44508a" fill-opacity="0.72" stroke="#22306a" stroke-width="1"/>
<circle cx="576.4" cy="360.5" r="6.3" fill="#6fb55f" fill-opacity="0.72" stroke="#3f8a33" stroke-width="1"/>
<circle cx="606.9" cy="365" r="6.3" fill="#e19090" fill-opacity="0.72" stroke="#b45f5f" stroke-width="1"/>
<circle cx="603.9" cy="365.7" r="6.3" fill="#a68bd6" fill-opacity="0.72" stroke="#7a5fb0" stroke-width="1"/>
<circle cx="617.3" cy="368" r="6.3" fill="#6fb55f" fill-opacity="0.72" stroke="#3f8a33" stroke-width="1"/>
<path d="M625.5 357.2A6.3 6.3 0 0 0 625.5 369.8Z" fill="#e19090" fill-opacity="0.8"/>
<path d="M625.5 357.2A6.3 6.3 0 0 1 625.5 369.8Z" fill="#44508a" fill-opacity="0.85"/>
<circle cx="625.5" cy="363.5" r="6.3" fill="none" stroke="#22306a" stroke-width="1"/>
<circle cx="644.2" cy="368" r="6.3" fill="#e19090" fill-opacity="0.72" stroke="#b45f5f" stroke-width="1"/>
<circle cx="647.9" cy="369.5" r="6.3" fill="#ababab" fill-opacity="0.72" stroke="#7a7a7a" stroke-width="1"/>
<circle cx="656" cy="369.5" r="6.3" fill="#6fb55f" fill-opacity="0.72" stroke="#3f8a33" stroke-width="1"/>
<circle cx="624.8" cy="380.6" r="6.3" fill="#44508a" fill-opacity="0.72" stroke="#22306a" stroke-width="1"/>
<circle cx="571.2" cy="393.3" r="6.3" fill="#e19090" fill-opacity="0.72" stroke="#b45f5f" stroke-width="1"/>
<circle cx="612.9" cy="392.6" r="6.3" fill="#6fb55f" fill-opacity="0.72" stroke="#3f8a33" stroke-width="1"/>
<circle cx="648.6" cy="391" r="6.3" fill="#6fb55f" fill-opacity="0.72" stroke="#3f8a33" stroke-width="1"/>
<circle cx="660.5" cy="391" r="6.3" fill="#6fb55f" fill-opacity="0.72" stroke="#3f8a33" stroke-width="1"/>
<circle cx="637.4" cy="394" r="6.3" fill="#f0a468" fill-opacity="0.72" stroke="#c07a40" stroke-width="1"/>
<circle cx="630.7" cy="403" r="6.3" fill="#6fb55f" fill-opacity="0.72" stroke="#3f8a33" stroke-width="1"/>
<circle cx="639" cy="401.5" r="6.3" fill="#ababab" fill-opacity="0.72" stroke="#7a7a7a" stroke-width="1"/>
<circle cx="659.6" cy="172" r="11.6" fill="#fff" fill-opacity="0.92" stroke="#222" stroke-width="1.4"/>
<path d="M653.4 172H665.8" stroke="#222" stroke-width="1.5"/>
<path d="M659.6 165.8V178.2" stroke="#222" stroke-width="1.5"/>
<circle cx="659.6" cy="212.8" r="11.6" fill="#fff" fill-opacity="0.92" stroke="#222" stroke-width="1.4"/>
<path d="M653.4 212.8H665.8" stroke="#222" stroke-width="1.5"/>
<rect x="150" y="527.5" width="3.8" height="3.8" fill="#f25022"/><rect x="154.2" y="527.5" width="3.8" height="3.8" fill="#7fba00"/><rect x="150" y="531.7" width="3.8" height="3.8" fill="#00a4ef"/><rect x="154.2" y="531.7" width="3.8" height="3.8" fill="#ffb900"/>
<text x="557.3" y="536.3" font-size="8" fill="#333" stroke="#fff" stroke-width="1.6" paint-order="stroke" textLength="92" lengthAdjust="spacingAndGlyphs">© 2022 Microsoft Corporation</text>
<text x="656" y="536.3" font-size="8" fill="#333" text-decoration="underline" textLength="22" lengthAdjust="spacingAndGlyphs">Terms</text>
</svg>
<!-- TOOLTIP -->
<div class="a" style="left:250px;top:327.7px;width:308px;height:232px;background:rgba(48,48,48,0.965)"></div>
<svg class="a" style="left:240px;top:320px" width="320" height="239" viewBox="240 320 320 239" font-family="Liberation Sans">
<path d="M250.2 332.5L244.6 339.7L250.2 347Z" fill="rgba(48,48,48,0.965)"/>
<text x="285.4" y="354.9" font-size="12.5" fill="#cfcfcf" textLength="40.8" lengthAdjust="spacingAndGlyphs">サービス</text>
<text x="300.4" y="371.9" font-size="12.5" fill="#cfcfcf" textLength="25.8" lengthAdjust="spacingAndGlyphs">•緯度</text>
<text x="300.4" y="389.6" font-size="12.5" fill="#cfcfcf" textLength="25.8" lengthAdjust="spacingAndGlyphs">•経度</text>
<text x="285.4" y="406.9" font-size="12.5" fill="#cfcfcf" textLength="40.8" lengthAdjust="spacingAndGlyphs">ホーム名</text>
<text x="264.6" y="424.0" font-size="12.5" fill="#cfcfcf" textLength="61.6" lengthAdjust="spacingAndGlyphs">協力医療機関</text>
<text x="337.0" y="354.9" font-size="12.5" fill="#f4f4f4" font-weight="bold" textLength="30.6" lengthAdjust="spacingAndGlyphs">介護付</text>
<text x="337.0" y="371.9" font-size="12.5" fill="#f4f4f4" font-weight="bold" textLength="85.7" lengthAdjust="spacingAndGlyphs">35.7080164150309</text>
<text x="337.0" y="389.6" font-size="12.5" fill="#f4f4f4" font-weight="bold" textLength="88.5" lengthAdjust="spacingAndGlyphs">139.530933435546</text>
<text x="337.0" y="406.9" font-size="12.5" fill="#f4f4f4" font-weight="bold" textLength="83.2" lengthAdjust="spacingAndGlyphs">グランダ東小金井</text>
<text x="337.0" y="424.0" font-size="12.5" fill="#f4f4f4" font-weight="bold" textLength="113.3" lengthAdjust="spacingAndGlyphs">•医療法人社団 岡田医院</text>
<text x="337.0" y="440.1" font-size="12.5" fill="#f4f4f4" font-weight="bold" textLength="168.0" lengthAdjust="spacingAndGlyphs">東京都練馬区関町北１丁目８番９号</text>
<text x="337.0" y="455.2" font-size="12.5" fill="#f4f4f4" font-weight="bold" textLength="199.4" lengthAdjust="spacingAndGlyphs">•医療法人社団 栄友会 府中ゆずクリニック</text>
<text x="337.0" y="470.6" font-size="12.5" fill="#f4f4f4" font-weight="bold" textLength="207.6" lengthAdjust="spacingAndGlyphs">東京都府中市白糸台1-63-1 リレ府中白糸台1F</text>
<text x="337.0" y="486.2" font-size="12.5" fill="#f4f4f4" font-weight="bold" textLength="168.0" lengthAdjust="spacingAndGlyphs">•医療法人社団 永寿会 三鷹中央病院</text>
<text x="337.0" y="501.4" font-size="12.5" fill="#f4f4f4" font-weight="bold" textLength="164.7" lengthAdjust="spacingAndGlyphs">東京都三鷹市上連雀５－２３－１０</text>
<text x="337.0" y="517.0" font-size="12.5" fill="#f4f4f4" font-weight="bold" textLength="168.0" lengthAdjust="spacingAndGlyphs">•医療法人 徳洲会 武蔵野徳洲会病院</text>
<text x="337.0" y="532.6" font-size="12.5" fill="#f4f4f4" font-weight="bold" textLength="186.5" lengthAdjust="spacingAndGlyphs">東京都西東京市向台町３丁目５番48号</text>
<text x="337.0" y="548.2" font-size="12.5" fill="#f4f4f4" font-weight="bold" textLength="168.0" lengthAdjust="spacingAndGlyphs">•社会福祉法人 聖ヨハネ会 桜町病院</text>
<text x="337.0" y="563.4" font-size="12.5" fill="#f4f4f4" font-weight="bold" textLength="178.0" lengthAdjust="spacingAndGlyphs">東京都小金井市桜町１丁目２番20号</text>
</svg>
<script>
(function(){
function fit(){
 var els=document.querySelectorAll('.f');
 for(var i=0;i<els.length;i++){
  var e=els[i],s=e.firstElementChild; if(!s) continue;
  var W=parseFloat(e.style.width); s.style.transform='none';
  var w=s.offsetWidth; if(w>0&&W>0) s.style.transform='scaleX('+(W/w).toFixed(4)+')';
 }
}
fit();
if(document.fonts&&document.fonts.ready){document.fonts.ready.then(fit);}
})();
</script>
</body></html>
